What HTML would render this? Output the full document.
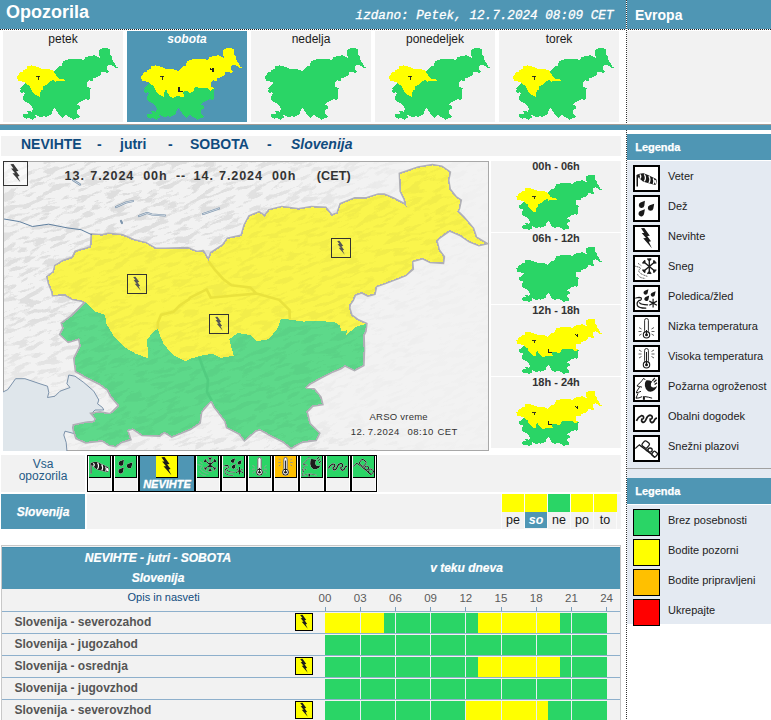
<!DOCTYPE html><html><head><meta charset="utf-8"><style>
*{margin:0;padding:0;box-sizing:border-box}
html,body{width:771px;height:720px;overflow:hidden;background:#fff;font-family:"Liberation Sans",sans-serif;}
.a{position:absolute;white-space:nowrap}
</style></head><body><svg width="0" height="0" style="position:absolute"><defs><symbol id="i-veter" viewBox="0 0 23 23"><rect x="1.5" y="8" width="1.5" height="11.5" fill="#1a1a1a"/>
<path d="M1.8,7.7 Q5,6 8.6,6.2 L13,8.1 L21.2,12.1 Q22.6,14.8 21,17.3 Q20.2,18.1 19.3,17.7 L13.8,16.3 Q9.5,15.4 7.6,14.3 L2,9.2Z" fill="#1a1a1a"/>
<path d="M4.9,7.4 Q6.6,9.5 4.9,11.6 M9.3,7.3 Q11.6,10.9 9.3,14.4 M13.9,9.2 Q16,12.7 13.9,16 M18.2,11.4 Q19.8,14.5 18.3,17.2" stroke="#fff" stroke-width="1.3" fill="none"/>
<ellipse cx="20.3" cy="14.8" rx="1.1" ry="2.1" fill="#fff" transform="rotate(-15 20.3 14.8)"/></symbol><symbol id="i-dez" viewBox="0 0 23 23"><path d="M9.90,3.80L9.38,8.51A2.8,2.8 0 1 1 5.53,5.61Z M9.90,12.20L9.06,17.08A2.8,2.8 0 1 1 5.29,13.99Z M19.20,6.80L18.36,11.50A2.8,2.8 0 1 1 14.69,8.35Z" fill="#1a1a1a"/></symbol><symbol id="i-nevihte" viewBox="0 0 23 23"><path d="M6,1.3 L9.3,1.1 L14.8,8.8 L12.2,9 L16,14.3 L13.8,14.8 L16.9,21.2 L8.2,11.3 L11,11.1 L6.7,6.1 L9.2,5.9 Z"/></symbol><symbol id="i-sneg" viewBox="0 0 23 23"><path d="M14.30,9.50L14.30,1.30M14.30,3.90L16.15,1.54M14.30,3.90L12.45,1.54M14.30,9.50L14.30,17.10M14.30,14.50L12.45,16.86M14.30,14.50L16.15,16.86M14.30,9.50L20.43,4.36M18.44,6.03L21.43,5.92M18.44,6.03L19.06,3.09M14.30,9.50L8.17,4.36M10.16,6.03L9.54,3.09M10.16,6.03L7.17,5.92M14.30,9.50L8.17,14.64M10.16,12.97L7.17,13.08M10.16,12.97L9.54,15.91M14.30,9.50L20.43,14.64M18.44,12.97L19.06,15.91M18.44,12.97L21.43,13.08" stroke="#1a1a1a" stroke-width="1.35" fill="none"/><path d="M0.2,9.2 L5.4,10.6 M3,6.3 L6.3,8.7 M5.9,11 Q-0.5,15.5 12.9,19.5 M2.5,17.2 Q4,21 10.1,21.4" stroke="#1a1a1a" stroke-width="0.7" stroke-dasharray="1.3 0.5" fill="none"/></symbol><symbol id="i-poledica" viewBox="0 0 23 23"><path d="M13.40,2.20L12.66,6.00A2.1,2.1 0 1 1 9.81,3.65Z M20.60,4.20L19.86,8.00A2.1,2.1 0 1 1 17.01,5.65Z M14.20,8.60L13.46,12.40A2.1,2.1 0 1 1 10.61,10.05Z" fill="#1a1a1a"/>
<path d="M0.8,11 L4,10.3 Q6.8,10.4 6.3,12.2 Q5.6,13.6 4.3,13.4 Q1.3,15.2 2.4,18.6 Q4,21.2 10.8,21.1 M4.6,15.8 Q6.2,17.6 12.6,17.8" stroke="#1a1a1a" stroke-width="1.25" fill="none" stroke-linecap="round"/>
<path d="M18.1,11.8 L18.1,20.6 M14.3,14.1 L21.9,18.3 M14.3,18.3 L21.9,14.1" stroke="#1a1a1a" stroke-width="1.2" fill="none"/></symbol><symbol id="i-nizka" viewBox="0 0 23 23"><rect x="9.6" y="1.5" width="3.8" height="14" rx="1.9" fill="#fff" stroke="#1a1a1a" stroke-width="0.9"/><circle cx="11.5" cy="17.8" r="3.2" fill="#fff" stroke="#1a1a1a" stroke-width="1.1"/><circle cx="11.5" cy="17.8" r="1.5" fill="#1a1a1a"/><rect x="11.0" y="13" width="1" height="4" fill="#1a1a1a"/><path d="M4,10.5 L6.5,12 M3.5,14.5 L6.5,14.5 M4,18.5 L6.5,17 M19,10.5 L16.5,12 M19.5,14.5 L16.5,14.5 M19,18.5 L16.5,17" stroke="#1a1a1a" stroke-width="0.7"/></symbol><symbol id="i-visoka" viewBox="0 0 23 23"><rect x="9.6" y="1.5" width="3.8" height="14" rx="1.9" fill="#fff" stroke="#1a1a1a" stroke-width="0.9"/><circle cx="11.5" cy="17.8" r="3.2" fill="#fff" stroke="#1a1a1a" stroke-width="1.1"/><circle cx="11.5" cy="17.8" r="1.5" fill="#1a1a1a"/><rect x="11.0" y="5" width="1" height="12" fill="#1a1a1a"/><path d="M4,3 L6.5,4.5 M3.5,7 L6.5,7 M4,11 L6.5,9.5 M19,3 L16.5,4.5 M19.5,7 L16.5,7 M19,11 L16.5,9.5" stroke="#1a1a1a" stroke-width="0.7"/></symbol><symbol id="i-pozar" viewBox="0 0 23 23"><path d="M8.7,1.2 L7.1,3.4 L5,5.9 L2.6,7.9 L2.2,9.1 Q4.5,9.3 7,10.2 M4.6,10 L3.4,11.9 L1.8,14.3 L1.4,15.9 Q3.5,15.4 6,14.3 M3,16.3 L2.2,18.3 L1,21.2 Q4,21.4 7.1,19.6 M9.9,19.6 Q13.5,20 17.1,21.2 M8.7,1.2 Q9.6,2 10.2,3" stroke="#1a1a1a" stroke-width="1.0" fill="none"/>
<rect x="7.9" y="19.2" width="2" height="3.6" fill="#1a1a1a"/>
<path d="M11.1,3.4 Q9.2,6 9.9,9 Q10.5,12.8 13.1,14.3 Q16.5,15.5 19.6,13.1 Q21.8,11 22,8.8 Q20.5,10.8 18.6,10.6 Q16.2,10.8 15.8,8.5 Q15.6,6 17.3,4.5 Q14,3 11.1,3.4Z" fill="#1a1a1a"/>
<path d="M17.3,3.8 L19.8,1 M18.8,5.4 L21.5,2.8 M19.6,7.6 L22,5.8" stroke="#1a1a1a" stroke-width="1.2" fill="none"/></symbol><symbol id="i-obalni" viewBox="0 0 23 23"><path d="M1.4,13.8 Q3,10 6.3,8.7 Q8.8,8.5 8.6,11 Q8,12.5 6.8,12.2 Q6,14.5 8,15.4 Q9.8,15.5 11,12.5 Q12.5,8.5 15,8.2 Q17.5,8.5 17.2,11 Q16.5,12.5 15.2,12.2 Q14.8,15 16.8,15.6 Q18.8,15.5 19.8,12.5 Q20.5,11.3 22,11.1" stroke="#1a1a1a" stroke-width="1.7" fill="none"/></symbol><symbol id="i-plaz" viewBox="0 0 23 23"><path d="M0.2,11.5 Q2.5,9.5 4.3,7.9 L11,13 L17,17.8 L19.8,20.5" stroke="#1a1a1a" stroke-width="1.2" fill="none"/>
<rect x="7.6" y="4.4" width="6.2" height="6.2" rx="1.6" transform="rotate(40 10.7 7.5)" fill="none" stroke="#1a1a1a" stroke-width="1.3"/>
<circle cx="15.1" cy="13.1" r="2.1" fill="none" stroke="#1a1a1a" stroke-width="1.3"/>
<circle cx="11.9" cy="13.1" r="0.9" fill="none" stroke="#1a1a1a" stroke-width="0.8"/>
<rect x="17.2" y="14.7" width="4.8" height="4.8" rx="1.2" transform="rotate(40 19.6 17.1)" fill="none" stroke="#1a1a1a" stroke-width="1.3"/></symbol><filter id="rf1" color-interpolation-filters="sRGB" filterUnits="userSpaceOnUse" x="-300" y="-300" width="1400" height="1400">
 <feTurbulence type="fractalNoise" baseFrequency="0.06 0.22" numOctaves="3" seed="7" result="n"/>
 <feColorMatrix in="n" type="matrix" values="0 0 0 0 0.865  0 0 0 0 0.865  0 0 0 0 0.865  4 0 0 0 -1.6"/>
 <feComponentTransfer><feFuncA type="discrete" tableValues="0 0 0.5 1"/></feComponentTransfer>
</filter>
<filter id="rf2" color-interpolation-filters="sRGB" filterUnits="userSpaceOnUse" x="-300" y="-300" width="1400" height="1400">
 <feTurbulence type="fractalNoise" baseFrequency="0.06 0.22" numOctaves="3" seed="7" result="n"/>
 <feColorMatrix in="n" type="matrix" values="0 0 0 0 0.2  0 0 0 0 0.2  0 0 0 0 0.2  4 0 0 0 -1.6"/>
 <feComponentTransfer><feFuncA type="discrete" tableValues="0 0 0.5 1"/></feComponentTransfer>
</filter>
<radialGradient id="rg" gradientUnits="userSpaceOnUse" cx="130" cy="195" r="340" fx="130" fy="195">
 <stop offset="0" stop-color="#fff"/><stop offset="0.4" stop-color="#fff" stop-opacity="0.85"/><stop offset="0.8" stop-color="#fff" stop-opacity="0.22"/><stop offset="1" stop-color="#fff" stop-opacity="0.1"/>
</radialGradient>
<radialGradient id="rg2"><stop offset="0" stop-color="#fff" stop-opacity="0.8"/><stop offset="1" stop-color="#fff" stop-opacity="0"/></radialGradient>
<mask id="rm" maskUnits="userSpaceOnUse" x="0" y="0" width="771" height="720"><rect x="4" y="162" width="484" height="288" fill="url(#rg)"/><ellipse cx="240" cy="455" rx="190" ry="45" fill="url(#rg2)"/><ellipse cx="30" cy="300" rx="60" ry="90" fill="url(#rg2)"/></mask>
<filter id="halo" x="-20%" y="-20%" width="140%" height="140%"><feMorphology in="SourceAlpha" operator="dilate" radius="0.5" result="d"/><feFlood flood-color="#fff" flood-opacity="0.75"/><feComposite in2="d" operator="in" result="w"/><feMerge><feMergeNode in="w"/><feMergeNode in="SourceGraphic"/></feMerge></filter>
<clipPath id="mclip"><rect x="4" y="162" width="484" height="288"/></clipPath></defs></svg>
<div class="a" style="left:0;top:0;width:626px;height:29px;background:#4f96b4"></div>
<div class="a" style="left:627px;top:0;width:144px;height:29px;background:#4f96b4"></div>
<div class="a" style="left:0;top:29px;width:771px;height:1px;background:repeating-linear-gradient(90deg,#222 0 1px,#fff 1px 2px)"></div>
<div class="a" style="left:626px;top:0;width:1px;height:720px;background:repeating-linear-gradient(180deg,#333 0 1px,#fff 1px 2px)"></div>
<div class="a" style="left:6.00px;top:2.56px;font-size:18px;line-height:18px;font-weight:bold;color:#fff">Opozorila</div>
<div class="a" style="left:355.60px;top:9.99px;font-size:12.65px;line-height:12.65px;font-family:'Liberation Mono',monospace;font-style:italic;color:#fff;-webkit-text-stroke:0.3px #fff">izdano: Petek, 12.7.2024 08:09 CET</div>
<div class="a" style="left:635.00px;top:7.85px;font-size:14px;line-height:14px;font-weight:bold;color:#fff">Evropa</div>
<div class="a" style="left:3px;top:31px;width:120px;height:91px;background:#f2f2f2"></div>
<div class="a" style="left:3.00px;top:32.54px;width:120px;text-align:center;font-size:12px;line-height:12px;color:#1a1a1a">petek</div>
<div class="a" style="left:127px;top:31px;width:120px;height:91px;background:#4f96b4"></div>
<div class="a" style="left:127.00px;top:32.54px;width:120px;text-align:center;font-size:12px;line-height:12px;font-weight:bold;font-style:italic;color:#fff">sobota</div>
<div class="a" style="left:251px;top:31px;width:120px;height:91px;background:#f2f2f2"></div>
<div class="a" style="left:251.00px;top:32.54px;width:120px;text-align:center;font-size:12px;line-height:12px;color:#1a1a1a">nedelja</div>
<div class="a" style="left:375px;top:31px;width:120px;height:91px;background:#f2f2f2"></div>
<div class="a" style="left:375.00px;top:32.54px;width:120px;text-align:center;font-size:12px;line-height:12px;color:#1a1a1a">ponedeljek</div>
<div class="a" style="left:499px;top:31px;width:120px;height:91px;background:#f2f2f2"></div>
<div class="a" style="left:499.00px;top:32.54px;width:120px;text-align:center;font-size:12px;line-height:12px;color:#1a1a1a">torek</div>
<div class="a" style="left:627px;top:31px;width:144px;height:91px;background:#f2f2f2"></div>
<svg class="a" style="left:0;top:0" width="771" height="130" shape-rendering="crispEdges"><path d="M17.0,76.4 18.4,75.2 18.8,73.6 20.6,72.4 22.8,71.6 23.5,70.0 26.0,69.2 27.1,68.8 27.3,65.6 29.6,65.8 31.0,65.4 34.3,65.8 36.8,67.0 39.7,67.8 41.9,69.2 44.3,69.3 49.3,69.1 51.5,70.1 52.9,69.9 54.2,72.2 54.9,70.3 57.6,68.3 58.7,66.7 61.9,65.9 62.6,63.1 63.7,60.9 65.9,59.9 67.2,60.9 68.3,59.3 71.1,58.6 75.1,59.1 78.0,58.6 81.2,58.7 82.7,60.7 84.1,60.1 84.8,57.7 88.1,56.4 90.6,56.4 93.5,55.4 94.8,55.4 96.9,56.4 99.1,57.6 100.0,58.4 99.7,56.4 98.8,54.4 98.6,50.0 100.2,49.4 102.7,48.4 106.0,47.8 108.1,48.2 109.9,49.6 109.6,51.6 109.9,54.0 111.4,56.0 112.5,56.8 112.1,58.8 111.7,59.6 113.2,61.2 115.3,64.0 116.0,66.3 118.2,67.7 116.8,68.1 114.6,67.1 112.5,65.5 109.9,64.3 107.4,66.3 106.9,67.1 107.4,69.5 108.6,71.2 108.4,72.7 105.5,72.5 103.7,71.5 101.2,72.2 101.4,74.2 99.7,75.8 97.9,76.6 95.1,77.8 92.9,78.6 92.5,80.6 91.1,81.0 89.7,80.2 88.0,80.8 87.5,82.2 86.8,83.3 86.7,84.3 87.2,86.3 88.6,87.4 90.6,88.4 90.4,90.2 90.0,91.2 90.1,95.1 89.9,98.9 88.0,100.1 85.8,98.9 84.7,99.7 82.9,100.5 80.0,102.1 77.5,103.7 76.3,104.8 78.6,105.2 80.0,107.2 80.4,108.8 78.3,109.2 76.8,110.8 77.5,114.0 79.7,116.4 79.0,118.0 76.1,118.4 75.1,118.8 73.3,120.0 71.5,118.4 68.6,116.8 66.1,115.2 65.0,115.6 62.5,118.0 61.4,116.4 58.6,114.8 58.2,113.2 57.1,111.6 55.7,109.6 54.9,108.0 54.2,108.4 52.4,110.8 52.1,113.6 49.9,115.2 45.7,117.1 43.9,115.9 42.8,116.9 38.9,116.7 36.7,115.1 35.3,115.5 36.0,117.9 33.9,118.6 32.7,119.6 31.2,119.2 29.7,118.1 25.8,118.6 23.7,117.6 23.1,115.6 23.1,114.4 25.8,113.8 27.9,113.6 28.2,112.6 27.3,111.4 29.1,111.1 31.5,111.6 33.6,109.3 31.6,106.7 30.9,105.1 29.0,103.6 26.1,102.0 23.6,100.4 23.2,97.2 24.7,94.0 24.3,92.0 21.8,92.9 20.0,91.1 20.7,89.5 20.4,88.3 22.5,86.5 25.7,82.9 24.9,82.3 22.8,81.9 21.0,80.7 18.2,80.9 18.1,80.0 17.3,78.0Z" fill="#2ad566"/><path d="M25.7,82.9 24.9,82.3 22.8,81.9 21.0,80.7 18.2,80.9 18.1,80.0 17.3,78.0 17.0,76.4 18.4,75.2 18.8,73.6 20.6,72.4 22.8,71.6 23.5,70.0 26.0,69.2 27.1,68.8 27.3,65.6 29.6,65.8 31.0,65.4 34.3,65.8 36.8,67.0 39.7,67.8 41.9,69.2 44.3,69.3 49.3,69.1 51.5,70.1 52.9,69.9 54.2,72.2 55.7,74.6 57.6,76.9 59.5,78.5 63.8,79.0 65.3,80.6 59.5,81.2 54.7,81.7 53.7,79.5 49.9,81.7 49.7,82.1 47.5,83.7 46.1,85.3 43.2,86.1 42.5,88.1 42.5,89.7 41.4,90.4 39.9,92.4 40.3,97.2 37.4,96.0 34.9,94.4 32.4,91.7 30.6,88.5 30.2,86.1 28.1,85.3 26.6,83.7Z" fill="#ffff00"/><path d="M35.59,76.40L40.44,76.40M38.02,76.40L38.02,80.00" stroke="#222" stroke-width="0.9" fill="none"/><path d="M141.0,76.4 142.4,75.2 142.8,73.6 144.6,72.4 146.8,71.6 147.5,70.0 150.0,69.2 151.1,68.8 151.3,65.6 153.6,65.8 155.0,65.4 158.3,65.8 160.8,67.0 163.7,67.8 165.9,69.2 168.3,69.3 173.3,69.1 175.5,70.1 176.9,69.9 178.2,72.2 178.9,70.3 181.6,68.3 182.7,66.7 185.9,65.9 186.6,63.1 187.7,60.9 189.9,59.9 191.2,60.9 192.3,59.3 195.1,58.6 199.1,59.1 202.0,58.6 205.2,58.7 206.7,60.7 208.1,60.1 208.8,57.7 212.1,56.4 214.6,56.4 217.5,55.4 218.8,55.4 220.9,56.4 223.1,57.6 224.0,58.4 223.7,56.4 222.8,54.4 222.6,50.0 224.2,49.4 226.7,48.4 230.0,47.8 232.1,48.2 233.9,49.6 233.6,51.6 233.9,54.0 235.4,56.0 236.5,56.8 236.1,58.8 235.7,59.6 237.2,61.2 239.3,64.0 240.0,66.3 242.2,67.7 240.8,68.1 238.6,67.1 236.5,65.5 233.9,64.3 231.4,66.3 230.9,67.1 231.4,69.5 232.6,71.2 232.4,72.7 229.5,72.5 227.7,71.5 225.2,72.2 225.4,74.2 223.7,75.8 221.9,76.6 219.1,77.8 216.9,78.6 216.5,80.6 215.1,81.0 213.7,80.2 212.0,80.8 211.5,82.2 210.8,83.3 210.7,84.3 211.2,86.3 212.6,87.4 214.6,88.4 214.4,90.2 214.0,91.2 214.1,95.1 213.9,98.9 212.0,100.1 209.8,98.9 208.7,99.7 206.9,100.5 204.0,102.1 201.5,103.7 200.3,104.8 202.6,105.2 204.0,107.2 204.4,108.8 202.3,109.2 200.8,110.8 201.5,114.0 203.7,116.4 203.0,118.0 200.1,118.4 199.1,118.8 197.3,120.0 195.5,118.4 192.6,116.8 190.1,115.2 189.0,115.6 186.5,118.0 185.4,116.4 182.6,114.8 182.2,113.2 181.1,111.6 179.7,109.6 178.9,108.0 178.2,108.4 176.4,110.8 176.1,113.6 173.9,115.2 169.7,117.1 167.9,115.9 166.8,116.9 162.9,116.7 160.7,115.1 159.3,115.5 160.0,117.9 157.9,118.6 156.7,119.6 155.2,119.2 153.7,118.1 149.8,118.6 147.7,117.6 147.1,115.6 147.1,114.4 149.8,113.8 151.9,113.6 152.2,112.6 151.3,111.4 153.1,111.1 155.5,111.6 157.6,109.3 155.6,106.7 154.9,105.1 153.0,103.6 150.1,102.0 147.6,100.4 147.2,97.2 148.7,94.0 148.3,92.0 145.8,92.9 144.0,91.1 144.7,89.5 144.4,88.3 146.5,86.5 149.7,82.9 148.9,82.3 146.8,81.9 145.0,80.7 142.2,80.9 142.1,80.0 141.3,78.0Z" fill="#2ad566"/><path d="M149.7,82.9 148.9,82.3 146.8,81.9 145.0,80.7 142.2,80.9 142.1,80.0 141.3,78.0 141.0,76.4 142.4,75.2 142.8,73.6 144.6,72.4 146.8,71.6 147.5,70.0 150.0,69.2 151.1,68.8 151.3,65.6 153.6,65.8 155.0,65.4 158.3,65.8 160.8,67.0 163.7,67.8 165.9,69.2 168.3,69.3 173.3,69.1 175.5,70.1 176.9,69.9 178.2,72.2 178.9,70.3 181.6,68.3 182.7,66.7 185.9,65.9 186.6,63.1 187.7,60.9 189.9,59.9 191.2,60.9 192.3,59.3 195.1,58.6 199.1,59.1 202.0,58.6 205.2,58.7 206.7,60.7 208.1,60.1 208.8,57.7 212.1,56.4 214.6,56.4 217.5,55.4 218.8,55.4 220.9,56.4 223.1,57.6 224.0,58.4 223.7,56.4 222.8,54.4 222.6,50.0 224.2,49.4 226.7,48.4 230.0,47.8 232.1,48.2 233.9,49.6 233.6,51.6 233.9,54.0 235.4,56.0 236.5,56.8 236.1,58.8 235.7,59.6 237.2,61.2 239.3,64.0 240.0,66.3 242.2,67.7 240.8,68.1 238.6,67.1 236.5,65.5 233.9,64.3 231.4,66.3 230.9,67.1 231.4,69.5 232.6,71.2 232.4,72.7 229.5,72.5 227.7,71.5 225.2,72.2 225.4,74.2 223.7,75.8 221.9,76.6 219.1,77.8 216.9,78.6 216.5,80.6 215.1,81.0 213.7,80.2 212.0,80.8 211.5,82.2 210.8,83.3 210.7,84.3 211.2,86.3 212.6,87.4 214.6,88.4 212.5,89.0 209.9,91.3 210.3,90.0 208.8,90.2 208.7,88.8 207.6,88.0 203.7,87.5 200.3,87.8 195.0,87.0 194.1,89.7 192.2,92.3 189.3,92.8 187.8,91.2 184.9,90.7 183.0,92.3 184.0,96.5 181.1,97.1 179.2,96.0 176.3,96.5 173.9,97.3 172.9,98.0 170.1,96.4 167.9,93.6 167.2,92.0 166.5,89.7 165.4,90.4 163.9,92.4 164.3,97.2 161.4,96.0 158.9,94.4 156.4,91.7 154.6,88.5 154.2,86.1 152.1,85.3 150.6,83.7Z" fill="#ffff00"/><path d="M159.59,76.40L164.44,76.40M162.02,76.40L162.02,80.00" stroke="#222" stroke-width="0.9" fill="none"/><path d="M212.95,67.60L212.95,72.00M209.91,68.30L212.24,70.30M178.99,86.80L178.99,91.40L183.44,91.40" stroke="#222" stroke-width="1.1" fill="none"/><path d="M265.0,76.4 266.4,75.2 266.8,73.6 268.6,72.4 270.8,71.6 271.5,70.0 274.0,69.2 275.1,68.8 275.3,65.6 277.6,65.8 279.0,65.4 282.3,65.8 284.8,67.0 287.7,67.8 289.9,69.2 292.3,69.3 297.3,69.1 299.5,70.1 300.9,69.9 302.2,72.2 302.9,70.3 305.6,68.3 306.7,66.7 309.9,65.9 310.6,63.1 311.7,60.9 313.9,59.9 315.2,60.9 316.3,59.3 319.1,58.6 323.1,59.1 326.0,58.6 329.2,58.7 330.7,60.7 332.1,60.1 332.8,57.7 336.1,56.4 338.6,56.4 341.5,55.4 342.8,55.4 344.9,56.4 347.1,57.6 348.0,58.4 347.7,56.4 346.8,54.4 346.6,50.0 348.2,49.4 350.7,48.4 354.0,47.8 356.1,48.2 357.9,49.6 357.6,51.6 357.9,54.0 359.4,56.0 360.5,56.8 360.1,58.8 359.7,59.6 361.2,61.2 363.3,64.0 364.0,66.3 366.2,67.7 364.8,68.1 362.6,67.1 360.5,65.5 357.9,64.3 355.4,66.3 354.9,67.1 355.4,69.5 356.6,71.2 356.4,72.7 353.5,72.5 351.7,71.5 349.2,72.2 349.4,74.2 347.7,75.8 345.9,76.6 343.1,77.8 340.9,78.6 340.5,80.6 339.1,81.0 337.7,80.2 336.0,80.8 335.5,82.2 334.8,83.3 334.7,84.3 335.2,86.3 336.6,87.4 338.6,88.4 338.4,90.2 338.0,91.2 338.1,95.1 337.9,98.9 336.0,100.1 333.8,98.9 332.7,99.7 330.9,100.5 328.0,102.1 325.5,103.7 324.3,104.8 326.6,105.2 328.0,107.2 328.4,108.8 326.3,109.2 324.8,110.8 325.5,114.0 327.7,116.4 327.0,118.0 324.1,118.4 323.1,118.8 321.3,120.0 319.5,118.4 316.6,116.8 314.1,115.2 313.0,115.6 310.5,118.0 309.4,116.4 306.6,114.8 306.2,113.2 305.1,111.6 303.7,109.6 302.9,108.0 302.2,108.4 300.4,110.8 300.1,113.6 297.9,115.2 293.7,117.1 291.9,115.9 290.8,116.9 286.9,116.7 284.7,115.1 283.3,115.5 284.0,117.9 281.9,118.6 280.7,119.6 279.2,119.2 277.7,118.1 273.8,118.6 271.7,117.6 271.1,115.6 271.1,114.4 273.8,113.8 275.9,113.6 276.2,112.6 275.3,111.4 277.1,111.1 279.5,111.6 281.6,109.3 279.6,106.7 278.9,105.1 277.0,103.6 274.1,102.0 271.6,100.4 271.2,97.2 272.7,94.0 272.3,92.0 269.8,92.9 268.0,91.1 268.7,89.5 268.4,88.3 270.5,86.5 273.7,82.9 272.9,82.3 270.8,81.9 269.0,80.7 266.2,80.9 266.1,80.0 265.3,78.0Z" fill="#2ad566"/><path d="M389.0,76.4 390.4,75.2 390.8,73.6 392.6,72.4 394.8,71.6 395.5,70.0 398.0,69.2 399.1,68.8 399.3,65.6 401.6,65.8 403.0,65.4 406.3,65.8 408.8,67.0 411.7,67.8 413.9,69.2 416.3,69.3 421.3,69.1 423.5,70.1 424.9,69.9 426.2,72.2 426.9,70.3 429.6,68.3 430.7,66.7 433.9,65.9 434.6,63.1 435.7,60.9 437.9,59.9 439.2,60.9 440.3,59.3 443.1,58.6 447.1,59.1 450.0,58.6 453.2,58.7 454.7,60.7 456.1,60.1 456.8,57.7 460.1,56.4 462.6,56.4 465.5,55.4 466.8,55.4 468.9,56.4 471.1,57.6 472.0,58.4 471.7,56.4 470.8,54.4 470.6,50.0 472.2,49.4 474.7,48.4 478.0,47.8 480.1,48.2 481.9,49.6 481.6,51.6 481.9,54.0 483.4,56.0 484.5,56.8 484.1,58.8 483.7,59.6 485.2,61.2 487.3,64.0 488.0,66.3 490.2,67.7 488.8,68.1 486.6,67.1 484.5,65.5 481.9,64.3 479.4,66.3 478.9,67.1 479.4,69.5 480.6,71.2 480.4,72.7 477.5,72.5 475.7,71.5 473.2,72.2 473.4,74.2 471.7,75.8 469.9,76.6 467.1,77.8 464.9,78.6 464.5,80.6 463.1,81.0 461.7,80.2 460.0,80.8 459.5,82.2 458.8,83.3 458.7,84.3 459.2,86.3 460.6,87.4 462.6,88.4 462.4,90.2 462.0,91.2 462.1,95.1 461.9,98.9 460.0,100.1 457.8,98.9 456.7,99.7 454.9,100.5 452.0,102.1 449.5,103.7 448.3,104.8 450.6,105.2 452.0,107.2 452.4,108.8 450.3,109.2 448.8,110.8 449.5,114.0 451.7,116.4 451.0,118.0 448.1,118.4 447.1,118.8 445.3,120.0 443.5,118.4 440.6,116.8 438.1,115.2 437.0,115.6 434.5,118.0 433.4,116.4 430.6,114.8 430.2,113.2 429.1,111.6 427.7,109.6 426.9,108.0 426.2,108.4 424.4,110.8 424.1,113.6 421.9,115.2 417.7,117.1 415.9,115.9 414.8,116.9 410.9,116.7 408.7,115.1 407.3,115.5 408.0,117.9 405.9,118.6 404.7,119.6 403.2,119.2 401.7,118.1 397.8,118.6 395.7,117.6 395.1,115.6 395.1,114.4 397.8,113.8 399.9,113.6 400.2,112.6 399.3,111.4 401.1,111.1 403.5,111.6 405.6,109.3 403.6,106.7 402.9,105.1 401.0,103.6 398.1,102.0 395.6,100.4 395.2,97.2 396.7,94.0 396.3,92.0 393.8,92.9 392.0,91.1 392.7,89.5 392.4,88.3 394.5,86.5 397.7,82.9 396.9,82.3 394.8,81.9 393.0,80.7 390.2,80.9 390.1,80.0 389.3,78.0Z" fill="#2ad566"/><path d="M397.7,82.9 396.9,82.3 394.8,81.9 393.0,80.7 390.2,80.9 390.1,80.0 389.3,78.0 389.0,76.4 390.4,75.2 390.8,73.6 392.6,72.4 394.8,71.6 395.5,70.0 398.0,69.2 399.1,68.8 399.3,65.6 401.6,65.8 403.0,65.4 406.3,65.8 408.8,67.0 411.7,67.8 413.9,69.2 416.3,69.3 421.3,69.1 423.5,70.1 424.9,69.9 426.2,72.2 427.7,74.6 429.6,76.9 431.5,78.5 435.8,79.0 437.3,80.6 431.5,81.2 426.7,81.7 425.7,79.5 421.9,81.7 421.7,82.1 419.5,83.7 418.1,85.3 415.2,86.1 414.5,88.1 414.5,89.7 413.4,90.4 411.9,92.4 412.3,97.2 409.4,96.0 406.9,94.4 404.4,91.7 402.6,88.5 402.2,86.1 400.1,85.3 398.6,83.7Z" fill="#ffff00"/><path d="M407.59,76.40L412.44,76.40M410.02,76.40L410.02,80.00" stroke="#222" stroke-width="0.9" fill="none"/><path d="M513.0,76.4 514.4,75.2 514.8,73.6 516.6,72.4 518.8,71.6 519.5,70.0 522.0,69.2 523.1,68.8 523.3,65.6 525.6,65.8 527.0,65.4 530.3,65.8 532.8,67.0 535.7,67.8 537.9,69.2 540.3,69.3 545.3,69.1 547.5,70.1 548.9,69.9 550.2,72.2 550.9,70.3 553.6,68.3 554.7,66.7 557.9,65.9 558.6,63.1 559.7,60.9 561.9,59.9 563.2,60.9 564.3,59.3 567.1,58.6 571.1,59.1 574.0,58.6 577.2,58.7 578.7,60.7 580.1,60.1 580.8,57.7 584.1,56.4 586.6,56.4 589.5,55.4 590.8,55.4 592.9,56.4 595.1,57.6 596.0,58.4 595.7,56.4 594.8,54.4 594.6,50.0 596.2,49.4 598.7,48.4 602.0,47.8 604.1,48.2 605.9,49.6 605.6,51.6 605.9,54.0 607.4,56.0 608.5,56.8 608.1,58.8 607.7,59.6 609.2,61.2 611.3,64.0 612.0,66.3 614.2,67.7 612.8,68.1 610.6,67.1 608.5,65.5 605.9,64.3 603.4,66.3 602.9,67.1 603.4,69.5 604.6,71.2 604.4,72.7 601.5,72.5 599.7,71.5 597.2,72.2 597.4,74.2 595.7,75.8 593.9,76.6 591.1,77.8 588.9,78.6 588.5,80.6 587.1,81.0 585.7,80.2 584.0,80.8 583.5,82.2 582.8,83.3 582.7,84.3 583.2,86.3 584.6,87.4 586.6,88.4 586.4,90.2 586.0,91.2 586.1,95.1 585.9,98.9 584.0,100.1 581.8,98.9 580.7,99.7 578.9,100.5 576.0,102.1 573.5,103.7 572.3,104.8 574.6,105.2 576.0,107.2 576.4,108.8 574.3,109.2 572.8,110.8 573.5,114.0 575.7,116.4 575.0,118.0 572.1,118.4 571.1,118.8 569.3,120.0 567.5,118.4 564.6,116.8 562.1,115.2 561.0,115.6 558.5,118.0 557.4,116.4 554.6,114.8 554.2,113.2 553.1,111.6 551.7,109.6 550.9,108.0 550.2,108.4 548.4,110.8 548.1,113.6 545.9,115.2 541.7,117.1 539.9,115.9 538.8,116.9 534.9,116.7 532.7,115.1 531.3,115.5 532.0,117.9 529.9,118.6 528.7,119.6 527.2,119.2 525.7,118.1 521.8,118.6 519.7,117.6 519.1,115.6 519.1,114.4 521.8,113.8 523.9,113.6 524.2,112.6 523.3,111.4 525.1,111.1 527.5,111.6 529.6,109.3 527.6,106.7 526.9,105.1 525.0,103.6 522.1,102.0 519.6,100.4 519.2,97.2 520.7,94.0 520.3,92.0 517.8,92.9 516.0,91.1 516.7,89.5 516.4,88.3 518.5,86.5 521.7,82.9 520.9,82.3 518.8,81.9 517.0,80.7 514.2,80.9 514.1,80.0 513.3,78.0Z" fill="#2ad566"/><path d="M521.7,82.9 520.9,82.3 518.8,81.9 517.0,80.7 514.2,80.9 514.1,80.0 513.3,78.0 513.0,76.4 514.4,75.2 514.8,73.6 516.6,72.4 518.8,71.6 519.5,70.0 522.0,69.2 523.1,68.8 523.3,65.6 525.6,65.8 527.0,65.4 530.3,65.8 532.8,67.0 535.7,67.8 537.9,69.2 540.3,69.3 545.3,69.1 547.5,70.1 548.9,69.9 550.2,72.2 551.7,74.6 553.6,76.9 555.5,78.5 559.8,79.0 561.3,80.6 555.5,81.2 550.7,81.7 549.7,79.5 545.9,81.7 545.7,82.1 543.5,83.7 542.1,85.3 539.2,86.1 538.5,88.1 538.5,89.7 537.4,90.4 535.9,92.4 536.3,97.2 533.4,96.0 530.9,94.4 528.4,91.7 526.6,88.5 526.2,86.1 524.1,85.3 522.6,83.7Z" fill="#ffff00"/><path d="M531.59,76.40L536.44,76.40M534.02,76.40L534.02,80.00" stroke="#222" stroke-width="0.9" fill="none"/></svg>
<div class="a" style="left:0;top:124px;width:771px;height:1px;background:#a39d97"></div>
<div class="a" style="left:0;top:125px;width:771px;height:5px;background:#4f96b4"></div>
<div class="a" style="left:1px;top:136px;width:620px;height:20px;background:#f2f2f2"></div>
<div class="a" style="left:21.00px;top:136.85px;font-size:14px;line-height:14px;font-weight:bold;color:#0f4b7e">NEVIHTE</div>
<div class="a" style="left:97.00px;top:136.85px;font-size:14px;line-height:14px;font-weight:bold;color:#0f4b7e">-</div>
<div class="a" style="left:120.00px;top:136.85px;font-size:14px;line-height:14px;font-weight:bold;color:#0f4b7e">jutri</div>
<div class="a" style="left:168.00px;top:136.85px;font-size:14px;line-height:14px;font-weight:bold;color:#0f4b7e">-</div>
<div class="a" style="left:190.00px;top:136.85px;font-size:14px;line-height:14px;font-weight:bold;color:#0f4b7e">SOBOTA</div>
<div class="a" style="left:267.00px;top:136.85px;font-size:14px;line-height:14px;font-weight:bold;color:#0f4b7e">-</div>
<div class="a" style="left:291.00px;top:136.85px;font-size:14px;line-height:14px;font-weight:bold;font-style:italic;color:#0f4b7e">Slovenija</div>
<div class="a" style="left:3px;top:161px;width:486px;height:290px;background:#f2f2f2;border:1px solid #a8a8a8"></div>
<svg class="a" style="left:0;top:0" width="771" height="720"><g clip-path="url(#mclip)"><g mask="url(#rm)"><g transform="rotate(-20 250 300)"><rect x="-150" y="0" width="800" height="600" filter="url(#rf1)"/></g></g></g><path d="M3.0,392.0 7.8,389.6 15.6,378.7 24.9,378.7 40.0,383.8 47.5,386.2 48.8,392.5 47.5,397.5 55.0,396.2 60.0,391.2 70.0,387.5 66.9,383.8 68.8,375.0 75.0,376.2 83.8,382.5 93.8,391.2 98.8,400.0 97.5,403.8 102.5,407.5 103.8,410.0 95.0,410.0 92.5,412.5 91.2,413.8 97.5,418.8 93.8,421.2 86.2,422.5 73.8,425.0 72.5,427.5 75.0,433.8 65.0,431.2 63.8,435.0 66.2,442.5 66.9,451.0 L3,451Z" fill="#dfe6eb"/><path d="M3.0,392.0 7.8,389.6 15.6,378.7 24.9,378.7 40.0,383.8 47.5,386.2 48.8,392.5 47.5,397.5 55.0,396.2 60.0,391.2 70.0,387.5 66.9,383.8 68.8,375.0 75.0,376.2 83.8,382.5 93.8,391.2 98.8,400.0 97.5,403.8 102.5,407.5 103.8,410.0 95.0,410.0 92.5,412.5 91.2,413.8 97.5,418.8 93.8,421.2 86.2,422.5 73.8,425.0 72.5,427.5 75.0,433.8 65.0,431.2 63.8,435.0 66.2,442.5 66.9,451.0" fill="none" stroke="#6f88a3" stroke-width="0.9"/><path d="M47.8,277.0 54.0,272.3 55.6,266.0 63.3,261.4 72.7,258.2 75.8,252.0 86.7,248.9 91.4,247.4 92.1,234.9 102.3,235.7 108.5,234.1 122.5,235.7 133.4,240.4 145.8,243.5 155.2,248.9 165.6,249.3 187.4,248.5 196.7,252.4 202.9,251.6 208.4,260.9 211.5,253.2 223.2,245.4 227.8,239.1 241.8,236.0 245.0,225.1 249.6,216.6 259.0,212.7 264.7,216.7 269.3,210.5 281.8,207.4 298.9,209.7 311.4,207.4 325.4,208.1 331.6,215.9 337.8,213.6 340.9,204.2 354.9,198.8 365.8,198.8 378.3,194.9 384.0,195.0 393.3,198.9 402.7,203.6 406.6,206.7 405.0,198.9 401.1,191.1 400.3,174.0 407.4,171.7 418.2,167.8 432.3,165.4 441.6,167.0 449.4,172.5 447.8,180.2 449.4,189.6 455.6,197.4 460.3,200.5 458.7,208.2 457.2,211.4 463.4,217.6 472.7,228.5 475.8,237.8 485.2,243.3 479.0,244.8 469.6,240.9 460.3,234.7 449.4,230.0 438.5,237.8 436.1,240.9 438.5,250.3 443.5,257.0 442.7,262.5 430.3,261.7 422.5,257.8 411.6,260.9 412.4,268.7 405.4,274.9 397.6,278.0 385.1,282.7 375.8,285.8 374.2,293.6 368.0,295.1 361.8,292.0 354.8,294.4 352.5,299.8 349.6,303.9 348.8,307.8 351.1,315.6 357.4,320.2 365.9,324.1 365.1,331.1 363.2,335.0 363.6,350.0 363.0,364.9 354.5,369.6 345.1,364.9 340.5,368.0 332.7,371.1 320.2,377.4 309.3,383.6 303.9,388.2 314.0,389.8 320.2,397.6 321.8,403.8 312.5,405.4 306.2,411.6 309.3,424.0 318.7,433.4 315.6,439.6 303.1,441.2 299.0,442.7 291.2,447.4 283.4,441.2 270.9,434.9 260.0,428.7 255.4,430.3 244.5,439.6 239.8,433.4 227.4,427.2 225.8,420.9 221.1,414.7 214.9,406.9 211.8,400.7 208.7,402.3 200.9,411.6 199.3,422.5 190.0,428.7 171.8,436.0 164.0,431.4 159.4,435.3 142.3,434.5 132.9,428.2 126.7,429.8 129.8,439.1 120.8,441.9 115.6,445.8 109.1,444.5 102.6,440.0 85.8,441.9 76.7,438.0 74.1,430.2 74.1,425.7 85.8,423.1 94.9,422.4 96.1,418.5 92.3,414.0 100.0,412.7 110.4,414.6 119.5,405.6 111.1,395.6 108.0,389.3 99.6,383.4 87.2,377.2 76.3,370.9 74.7,358.5 80.9,346.0 79.4,338.2 68.5,341.4 60.7,334.4 63.8,328.1 62.3,323.5 71.6,316.5 85.6,302.5 82.0,300.3 72.7,298.7 64.9,294.0 53.2,294.8 52.5,291.0 49.3,283.2Z" fill="none" stroke="#b0b0b6" stroke-width="3.4"/><path d="M85.6,302.5 82.0,300.3 72.7,298.7 64.9,294.0 53.2,294.8 52.5,291.0 49.3,283.2 47.8,277.0 54.0,272.3 55.6,266.0 63.3,261.4 72.7,258.2 75.8,252.0 86.7,248.9 91.4,247.4 92.1,234.9 102.3,235.7 108.5,234.1 122.5,235.7 133.4,240.4 145.8,243.5 155.2,248.9 165.6,249.3 187.4,248.5 196.7,252.4 202.9,251.6 208.4,260.9 211.5,253.2 223.2,245.4 227.8,239.1 241.8,236.0 245.0,225.1 249.6,216.6 259.0,212.7 264.7,216.7 269.3,210.5 281.8,207.4 298.9,209.7 311.4,207.4 325.4,208.1 331.6,215.9 337.8,213.6 340.9,204.2 354.9,198.8 365.8,198.8 378.3,194.9 384.0,195.0 393.3,198.9 402.7,203.6 406.6,206.7 405.0,198.9 401.1,191.1 400.3,174.0 407.4,171.7 418.2,167.8 432.3,165.4 441.6,167.0 449.4,172.5 447.8,180.2 449.4,189.6 455.6,197.4 460.3,200.5 458.7,208.2 457.2,211.4 463.4,217.6 472.7,228.5 475.8,237.8 485.2,243.3 479.0,244.8 469.6,240.9 460.3,234.7 449.4,230.0 438.5,237.8 436.1,240.9 438.5,250.3 443.5,257.0 442.7,262.5 430.3,261.7 422.5,257.8 411.6,260.9 412.4,268.7 405.4,274.9 397.6,278.0 385.1,282.7 375.8,285.8 374.2,293.6 368.0,295.1 361.8,292.0 354.8,294.4 352.5,299.8 349.6,303.9 348.8,307.8 351.1,315.6 357.4,320.2 365.9,324.1 356.6,326.5 345.7,335.4 347.2,330.4 341.0,331.1 340.2,325.7 335.6,322.6 318.7,320.6 304.1,321.6 281.3,318.5 277.2,328.9 268.9,339.2 256.4,341.3 250.2,335.1 237.7,333.0 229.4,339.2 233.6,355.8 221.1,357.9 212.8,353.8 200.4,355.8 190.0,358.9 185.8,361.6 173.4,355.4 164.0,344.5 160.9,338.2 157.8,328.9 153.2,332.0 146.9,339.8 148.5,358.5 136.0,353.8 125.1,347.6 114.2,336.7 106.5,324.2 104.9,314.9 95.6,311.8 89.3,305.6Z" fill="#faf54c" shape-rendering="crispEdges"/><path d="M365.9,324.1 365.1,331.1 363.2,335.0 363.6,350.0 363.0,364.9 354.5,369.6 345.1,364.9 340.5,368.0 332.7,371.1 320.2,377.4 309.3,383.6 303.9,388.2 314.0,389.8 320.2,397.6 321.8,403.8 312.5,405.4 306.2,411.6 309.3,424.0 318.7,433.4 315.6,439.6 303.1,441.2 299.0,442.7 291.2,447.4 283.4,441.2 270.9,434.9 260.0,428.7 255.4,430.3 244.5,439.6 239.8,433.4 227.4,427.2 225.8,420.9 221.1,414.7 214.9,406.9 211.8,400.7 208.7,402.3 200.9,411.6 199.3,422.5 190.0,428.7 171.8,436.0 164.0,431.4 159.4,435.3 142.3,434.5 132.9,428.2 126.7,429.8 129.8,439.1 120.8,441.9 115.6,445.8 109.1,444.5 102.6,440.0 85.8,441.9 76.7,438.0 74.1,430.2 74.1,425.7 85.8,423.1 94.9,422.4 96.1,418.5 92.3,414.0 100.0,412.7 110.4,414.6 119.5,405.6 111.1,395.6 108.0,389.3 99.6,383.4 87.2,377.2 76.3,370.9 74.7,358.5 80.9,346.0 79.4,338.2 68.5,341.4 60.7,334.4 63.8,328.1 62.3,323.5 71.6,316.5 85.6,302.5 89.3,305.6 95.6,311.8 104.9,314.9 106.5,324.2 114.2,336.7 125.1,347.6 136.0,353.8 148.5,358.5 146.9,339.8 153.2,332.0 157.8,328.9 160.9,338.2 164.0,344.5 173.4,355.4 185.8,361.6 190.0,358.9 200.4,355.8 212.8,353.8 221.1,357.9 233.6,355.8 229.4,339.2 237.7,333.0 250.2,335.1 256.4,341.3 268.9,339.2 277.2,328.9 281.3,318.5 304.1,321.6 318.7,320.6 335.6,322.6 340.2,325.7 341.0,331.1 347.2,330.4 345.7,335.4 356.6,326.5Z" fill="#5dd98a" shape-rendering="crispEdges"/><clipPath id="cclip"><path d="M47.8,277.0 54.0,272.3 55.6,266.0 63.3,261.4 72.7,258.2 75.8,252.0 86.7,248.9 91.4,247.4 92.1,234.9 102.3,235.7 108.5,234.1 122.5,235.7 133.4,240.4 145.8,243.5 155.2,248.9 165.6,249.3 187.4,248.5 196.7,252.4 202.9,251.6 208.4,260.9 211.5,253.2 223.2,245.4 227.8,239.1 241.8,236.0 245.0,225.1 249.6,216.6 259.0,212.7 264.7,216.7 269.3,210.5 281.8,207.4 298.9,209.7 311.4,207.4 325.4,208.1 331.6,215.9 337.8,213.6 340.9,204.2 354.9,198.8 365.8,198.8 378.3,194.9 384.0,195.0 393.3,198.9 402.7,203.6 406.6,206.7 405.0,198.9 401.1,191.1 400.3,174.0 407.4,171.7 418.2,167.8 432.3,165.4 441.6,167.0 449.4,172.5 447.8,180.2 449.4,189.6 455.6,197.4 460.3,200.5 458.7,208.2 457.2,211.4 463.4,217.6 472.7,228.5 475.8,237.8 485.2,243.3 479.0,244.8 469.6,240.9 460.3,234.7 449.4,230.0 438.5,237.8 436.1,240.9 438.5,250.3 443.5,257.0 442.7,262.5 430.3,261.7 422.5,257.8 411.6,260.9 412.4,268.7 405.4,274.9 397.6,278.0 385.1,282.7 375.8,285.8 374.2,293.6 368.0,295.1 361.8,292.0 354.8,294.4 352.5,299.8 349.6,303.9 348.8,307.8 351.1,315.6 357.4,320.2 365.9,324.1 365.1,331.1 363.2,335.0 363.6,350.0 363.0,364.9 354.5,369.6 345.1,364.9 340.5,368.0 332.7,371.1 320.2,377.4 309.3,383.6 303.9,388.2 314.0,389.8 320.2,397.6 321.8,403.8 312.5,405.4 306.2,411.6 309.3,424.0 318.7,433.4 315.6,439.6 303.1,441.2 299.0,442.7 291.2,447.4 283.4,441.2 270.9,434.9 260.0,428.7 255.4,430.3 244.5,439.6 239.8,433.4 227.4,427.2 225.8,420.9 221.1,414.7 214.9,406.9 211.8,400.7 208.7,402.3 200.9,411.6 199.3,422.5 190.0,428.7 171.8,436.0 164.0,431.4 159.4,435.3 142.3,434.5 132.9,428.2 126.7,429.8 129.8,439.1 120.8,441.9 115.6,445.8 109.1,444.5 102.6,440.0 85.8,441.9 76.7,438.0 74.1,430.2 74.1,425.7 85.8,423.1 94.9,422.4 96.1,418.5 92.3,414.0 100.0,412.7 110.4,414.6 119.5,405.6 111.1,395.6 108.0,389.3 99.6,383.4 87.2,377.2 76.3,370.9 74.7,358.5 80.9,346.0 79.4,338.2 68.5,341.4 60.7,334.4 63.8,328.1 62.3,323.5 71.6,316.5 85.6,302.5 82.0,300.3 72.7,298.7 64.9,294.0 53.2,294.8 52.5,291.0 49.3,283.2Z"/></clipPath><g clip-path="url(#cclip)" opacity="0.035"><g transform="rotate(-20 250 300)"><rect x="-150" y="0" width="800" height="600" filter="url(#rf2)"/></g></g><path d="M208.4,260.9 215.0,270.0 223.2,279.0 231.5,285.3 250.2,287.4 256.4,293.6 M256.4,293.6 279.2,299.8 289.6,310.2 289.6,316.4 290.0,319.5 M256.4,293.6 231.5,295.7 210.8,297.7 206.6,289.4 190.0,297.7 189.0,299.3 179.6,305.6 173.4,311.8 161.0,314.9 157.8,322.7 157.8,328.9" fill="none" stroke="#e9e23e" stroke-width="2.6"/><path d="M199.3,357.1 203.0,368.0 208.0,380.0 207.0,392.0 211.8,400.7" fill="none" stroke="#52cc80" stroke-width="2.6"/><path d="M4,219 L19.5,221.6 L32.4,226.5 L48.6,224.2 L68,228 L81,229.7 L92.1,234.9" fill="none" stroke="#5f7f9f" stroke-width="1"/><path d="M116,207 L126,202.5 L133,201 M139,216 L147,213 L152,214.5 L165,215.5 M203,214 L219,208.5 M73,180 L80,184.5 M121,221 L122,223" fill="none" stroke="#7d95ad" stroke-width="2.2" stroke-linecap="round"/><path d="M116,207 L126,202.5 L133,201 M139,216 L147,213 L152,214.5 L165,215.5 M203,214 L219,208.5 M73,180 L80,184.5" fill="none" stroke="#dfe6ec" stroke-width="0.8" stroke-linecap="round"/></svg>
<div class="a" style="left:127px;top:274px;width:20px;height:20px;border:1px solid #333"></div>
<svg class="a" style="left:129px;top:276px" width="16" height="16" viewBox="0 0 23 23"><use href="#i-nevihte" fill="#555"/></svg>
<div class="a" style="left:331px;top:238px;width:20px;height:20px;border:1px solid #333"></div>
<svg class="a" style="left:333px;top:240px" width="16" height="16" viewBox="0 0 23 23"><use href="#i-nevihte" fill="#555"/></svg>
<div class="a" style="left:209px;top:314px;width:20px;height:20px;border:1px solid #333"></div>
<svg class="a" style="left:211px;top:316px" width="16" height="16" viewBox="0 0 23 23"><use href="#i-nevihte" fill="#555"/></svg>
<div class="a" style="left:3px;top:161px;width:25px;height:25px;border:1px solid #333;background:rgba(255,255,255,0.5)"></div>
<svg class="a" style="left:5px;top:163px" width="21" height="21" viewBox="0 0 23 23"><use href="#i-nevihte" fill="#3a3a3a"/></svg>
<div class="a" style="left:64.60px;top:170.03px;font-size:12.6px;line-height:12.6px;font-weight:bold;color:#333;letter-spacing:0.9px">13.</div>
<div class="a" style="left:90.30px;top:170.03px;font-size:12.6px;line-height:12.6px;font-weight:bold;color:#333;letter-spacing:0.9px">7.2024</div>
<div class="a" style="left:143.20px;top:170.03px;font-size:12.6px;line-height:12.6px;font-weight:bold;color:#333;letter-spacing:0.9px">00h</div>
<div class="a" style="left:175.90px;top:170.03px;font-size:12.6px;line-height:12.6px;font-weight:bold;color:#333;letter-spacing:0.9px">--</div>
<div class="a" style="left:193.60px;top:170.03px;font-size:12.6px;line-height:12.6px;font-weight:bold;color:#333;letter-spacing:0.9px">14.</div>
<div class="a" style="left:219.00px;top:170.03px;font-size:12.6px;line-height:12.6px;font-weight:bold;color:#333;letter-spacing:0.9px">7.2024</div>
<div class="a" style="left:271.90px;top:170.03px;font-size:12.6px;line-height:12.6px;font-weight:bold;color:#333;letter-spacing:0.9px">00h</div>
<div class="a" style="left:316.70px;top:170.03px;font-size:12.6px;line-height:12.6px;font-weight:bold;color:#333;letter-spacing:0.1px">(CET)</div>
<div class="a" style="left:369.50px;top:412.06px;font-size:9.5px;line-height:9.5px;color:#333;letter-spacing:0.24px">ARSO vreme</div>
<div class="a" style="left:350.70px;top:426.86px;font-size:9.5px;line-height:9.5px;color:#333;letter-spacing:0.5px">12.</div>
<div class="a" style="left:367.80px;top:426.86px;font-size:9.5px;line-height:9.5px;color:#333;letter-spacing:0.5px">7.2024</div>
<div class="a" style="left:407.50px;top:426.86px;font-size:9.5px;line-height:9.5px;color:#333;letter-spacing:0.5px">08:10</div>
<div class="a" style="left:437.40px;top:426.86px;font-size:9.5px;line-height:9.5px;color:#333;letter-spacing:0.5px">CET</div>
<div class="a" style="left:491px;top:161px;width:130px;height:71px;background:#f2f2f2"></div>
<div class="a" style="left:491.00px;top:161.49px;width:130px;text-align:center;font-size:11px;line-height:11px;font-weight:bold;color:#333">00h - 06h</div>
<div class="a" style="left:491px;top:233px;width:130px;height:71px;background:#f2f2f2"></div>
<div class="a" style="left:491.00px;top:233.49px;width:130px;text-align:center;font-size:11px;line-height:11px;font-weight:bold;color:#333">06h - 12h</div>
<div class="a" style="left:491px;top:305px;width:130px;height:71px;background:#f2f2f2"></div>
<div class="a" style="left:491.00px;top:305.49px;width:130px;text-align:center;font-size:11px;line-height:11px;font-weight:bold;color:#333">12h - 18h</div>
<div class="a" style="left:491px;top:377px;width:130px;height:71px;background:#f2f2f2"></div>
<div class="a" style="left:491.00px;top:377.49px;width:130px;text-align:center;font-size:11px;line-height:11px;font-weight:bold;color:#333">18h - 24h</div>
<svg class="a" style="left:0;top:0" width="771" height="720" shape-rendering="crispEdges"><path d="M516.3,196.5 517.5,195.6 517.8,194.3 519.3,193.4 521.2,192.8 521.8,191.6 523.9,190.9 524.9,190.7 525.0,188.2 527.0,188.3 528.2,188.0 531.0,188.3 533.1,189.3 535.6,189.9 537.4,190.9 539.5,191.0 543.7,190.9 545.6,191.6 546.8,191.5 547.9,193.3 548.5,191.8 550.8,190.3 551.7,189.0 554.4,188.4 555.1,186.3 556.0,184.6 557.8,183.8 558.9,184.6 559.8,183.4 562.3,182.8 565.7,183.2 568.1,182.8 570.9,182.9 572.1,184.4 573.3,184.0 573.9,182.1 576.7,181.1 578.8,181.1 581.3,180.3 582.4,180.3 584.2,181.1 586.1,182.0 586.8,182.6 586.5,181.1 585.8,179.6 585.6,176.2 587.0,175.7 589.1,175.0 591.9,174.5 593.7,174.8 595.3,175.9 594.9,177.4 595.3,179.3 596.5,180.8 597.4,181.4 597.1,182.9 596.8,183.6 598.0,184.8 599.8,186.9 600.4,188.8 602.3,189.8 601.1,190.1 599.2,189.4 597.4,188.2 595.3,187.2 593.1,188.8 592.6,189.4 593.1,191.2 594.1,192.5 593.9,193.6 591.5,193.5 590.0,192.7 587.8,193.3 588.0,194.9 586.6,196.1 585.1,196.7 582.6,197.6 580.8,198.2 580.5,199.8 579.3,200.1 578.0,199.4 576.7,199.9 576.2,201.0 575.6,201.8 575.5,202.6 575.9,204.1 577.2,205.0 578.8,205.8 578.7,207.1 578.3,207.9 578.4,210.9 578.3,213.8 576.6,214.7 574.7,213.8 573.8,214.4 572.3,215.0 569.9,216.3 567.7,217.5 566.6,218.4 568.6,218.7 569.9,220.2 570.2,221.5 568.3,221.8 567.1,223.0 567.7,225.4 569.6,227.3 568.9,228.5 566.5,228.8 565.7,229.1 564.2,230.1 562.6,228.8 560.2,227.6 558.0,226.4 557.1,226.7 555.0,228.5 554.0,227.3 551.6,226.1 551.3,224.8 550.4,223.6 549.2,222.1 548.5,220.9 547.9,221.2 546.4,223.0 546.1,225.1 544.3,226.4 540.7,227.8 539.1,226.9 538.2,227.7 534.9,227.5 533.0,226.3 531.8,226.6 532.4,228.4 530.7,229.0 529.6,229.7 528.4,229.5 527.1,228.6 523.8,229.0 522.0,228.2 521.5,226.7 521.5,225.8 523.8,225.3 525.6,225.1 525.8,224.4 525.0,223.5 526.6,223.2 528.6,223.6 530.4,221.8 528.7,219.8 528.1,218.6 526.5,217.4 524.0,216.2 521.9,215.0 521.6,212.5 522.8,210.1 522.5,208.5 520.4,209.2 518.8,207.8 519.4,206.6 519.2,205.6 521.0,204.3 523.7,201.5 523.0,201.1 521.2,200.8 519.7,199.8 517.4,200.0 517.2,199.2 516.6,197.7Z" fill="#2ad566"/><path d="M523.7,201.5 523.0,201.1 521.2,200.8 519.7,199.8 517.4,200.0 517.2,199.2 516.6,197.7 516.3,196.5 517.5,195.6 517.8,194.3 519.3,193.4 521.2,192.8 521.8,191.6 523.9,190.9 524.9,190.7 525.0,188.2 527.0,188.3 528.2,188.0 531.0,188.3 533.1,189.3 535.6,189.9 537.4,190.9 539.5,191.0 543.7,190.9 545.6,191.6 546.8,191.5 547.9,193.3 549.2,195.1 550.8,196.9 552.4,198.1 556.1,198.5 557.3,199.8 552.4,200.2 548.3,200.6 547.5,198.9 544.3,200.6 544.1,200.9 542.2,202.1 541.0,203.3 538.6,204.0 537.9,205.5 537.9,206.7 537.0,207.3 535.8,208.9 536.1,212.5 533.6,211.6 531.5,210.4 529.4,208.2 527.8,205.8 527.5,204.0 525.7,203.3 524.5,202.1Z" fill="#ffff00"/><path d="M532.10,196.51L536.22,196.51M534.16,196.51L534.16,199.28" stroke="#222" stroke-width="0.9" fill="none"/><path d="M516.3,268.5 517.5,267.6 517.8,266.3 519.3,265.4 521.2,264.8 521.8,263.6 523.9,262.9 524.9,262.7 525.0,260.2 527.0,260.3 528.2,260.0 531.0,260.3 533.1,261.3 535.6,261.9 537.4,262.9 539.5,263.0 543.7,262.9 545.6,263.6 546.8,263.5 547.9,265.3 548.5,263.8 550.8,262.3 551.7,261.0 554.4,260.4 555.1,258.3 556.0,256.6 557.8,255.8 558.9,256.6 559.8,255.4 562.3,254.8 565.7,255.2 568.1,254.8 570.9,254.9 572.1,256.4 573.3,256.0 573.9,254.1 576.7,253.1 578.8,253.1 581.3,252.3 582.4,252.3 584.2,253.1 586.1,254.0 586.8,254.6 586.5,253.1 585.8,251.6 585.6,248.2 587.0,247.7 589.1,247.0 591.9,246.5 593.7,246.8 595.3,247.9 594.9,249.4 595.3,251.3 596.5,252.8 597.4,253.4 597.1,254.9 596.8,255.6 598.0,256.8 599.8,258.9 600.4,260.8 602.3,261.8 601.1,262.1 599.2,261.4 597.4,260.2 595.3,259.2 593.1,260.8 592.6,261.4 593.1,263.2 594.1,264.5 593.9,265.6 591.5,265.5 590.0,264.7 587.8,265.3 588.0,266.9 586.6,268.1 585.1,268.7 582.6,269.6 580.8,270.2 580.5,271.8 579.3,272.1 578.0,271.4 576.7,271.9 576.2,273.0 575.6,273.8 575.5,274.6 575.9,276.1 577.2,277.0 578.8,277.8 578.7,279.1 578.3,279.9 578.4,282.9 578.3,285.8 576.6,286.7 574.7,285.8 573.8,286.4 572.3,287.0 569.9,288.3 567.7,289.5 566.6,290.4 568.6,290.7 569.9,292.2 570.2,293.5 568.3,293.8 567.1,295.0 567.7,297.4 569.6,299.3 568.9,300.5 566.5,300.8 565.7,301.1 564.2,302.1 562.6,300.8 560.2,299.6 558.0,298.4 557.1,298.7 555.0,300.5 554.0,299.3 551.6,298.1 551.3,296.8 550.4,295.6 549.2,294.1 548.5,292.9 547.9,293.2 546.4,295.0 546.1,297.1 544.3,298.4 540.7,299.8 539.1,298.9 538.2,299.7 534.9,299.5 533.0,298.3 531.8,298.6 532.4,300.4 530.7,301.0 529.6,301.7 528.4,301.5 527.1,300.6 523.8,301.0 522.0,300.2 521.5,298.7 521.5,297.8 523.8,297.3 525.6,297.1 525.8,296.4 525.0,295.5 526.6,295.2 528.6,295.6 530.4,293.8 528.7,291.8 528.1,290.6 526.5,289.4 524.0,288.2 521.9,287.0 521.6,284.5 522.8,282.1 522.5,280.5 520.4,281.2 518.8,279.8 519.4,278.6 519.2,277.6 521.0,276.3 523.7,273.5 523.0,273.1 521.2,272.8 519.7,271.8 517.4,272.0 517.2,271.2 516.6,269.7Z" fill="#2ad566"/><path d="M516.3,340.5 517.5,339.6 517.8,338.3 519.3,337.4 521.2,336.8 521.8,335.6 523.9,334.9 524.9,334.7 525.0,332.2 527.0,332.3 528.2,332.0 531.0,332.3 533.1,333.3 535.6,333.9 537.4,334.9 539.5,335.0 543.7,334.9 545.6,335.6 546.8,335.5 547.9,337.3 548.5,335.8 550.8,334.3 551.7,333.0 554.4,332.4 555.1,330.3 556.0,328.6 557.8,327.8 558.9,328.6 559.8,327.4 562.3,326.8 565.7,327.2 568.1,326.8 570.9,326.9 572.1,328.4 573.3,328.0 573.9,326.1 576.7,325.1 578.8,325.1 581.3,324.3 582.4,324.3 584.2,325.1 586.1,326.0 586.8,326.6 586.5,325.1 585.8,323.6 585.6,320.2 587.0,319.7 589.1,319.0 591.9,318.5 593.7,318.8 595.3,319.9 594.9,321.4 595.3,323.3 596.5,324.8 597.4,325.4 597.1,326.9 596.8,327.6 598.0,328.8 599.8,330.9 600.4,332.8 602.3,333.8 601.1,334.1 599.2,333.4 597.4,332.2 595.3,331.2 593.1,332.8 592.6,333.4 593.1,335.2 594.1,336.5 593.9,337.6 591.5,337.5 590.0,336.7 587.8,337.3 588.0,338.9 586.6,340.1 585.1,340.7 582.6,341.6 580.8,342.2 580.5,343.8 579.3,344.1 578.0,343.4 576.7,343.9 576.2,345.0 575.6,345.8 575.5,346.6 575.9,348.1 577.2,349.0 578.8,349.8 578.7,351.1 578.3,351.9 578.4,354.9 578.3,357.8 576.6,358.7 574.7,357.8 573.8,358.4 572.3,359.0 569.9,360.3 567.7,361.5 566.6,362.4 568.6,362.7 569.9,364.2 570.2,365.5 568.3,365.8 567.1,367.0 567.7,369.4 569.6,371.3 568.9,372.5 566.5,372.8 565.7,373.1 564.2,374.1 562.6,372.8 560.2,371.6 558.0,370.4 557.1,370.7 555.0,372.5 554.0,371.3 551.6,370.1 551.3,368.8 550.4,367.6 549.2,366.1 548.5,364.9 547.9,365.2 546.4,367.0 546.1,369.1 544.3,370.4 540.7,371.8 539.1,370.9 538.2,371.7 534.9,371.5 533.0,370.3 531.8,370.6 532.4,372.4 530.7,373.0 529.6,373.7 528.4,373.5 527.1,372.6 523.8,373.0 522.0,372.2 521.5,370.7 521.5,369.8 523.8,369.3 525.6,369.1 525.8,368.4 525.0,367.5 526.6,367.2 528.6,367.6 530.4,365.8 528.7,363.8 528.1,362.6 526.5,361.4 524.0,360.2 521.9,359.0 521.6,356.5 522.8,354.1 522.5,352.5 520.4,353.2 518.8,351.8 519.4,350.6 519.2,349.6 521.0,348.3 523.7,345.5 523.0,345.1 521.2,344.8 519.7,343.8 517.4,344.0 517.2,343.2 516.6,341.7Z" fill="#2ad566"/><path d="M523.7,345.5 523.0,345.1 521.2,344.8 519.7,343.8 517.4,344.0 517.2,343.2 516.6,341.7 516.3,340.5 517.5,339.6 517.8,338.3 519.3,337.4 521.2,336.8 521.8,335.6 523.9,334.9 524.9,334.7 525.0,332.2 527.0,332.3 528.2,332.0 531.0,332.3 533.1,333.3 535.6,333.9 537.4,334.9 539.5,335.0 543.7,334.9 545.6,335.6 546.8,335.5 547.9,337.3 548.5,335.8 550.8,334.3 551.7,333.0 554.4,332.4 555.1,330.3 556.0,328.6 557.8,327.8 558.9,328.6 559.8,327.4 562.3,326.8 565.7,327.2 568.1,326.8 570.9,326.9 572.1,328.4 573.3,328.0 573.9,326.1 576.7,325.1 578.8,325.1 581.3,324.3 582.4,324.3 584.2,325.1 586.1,326.0 586.8,326.6 586.5,325.1 585.8,323.6 585.6,320.2 587.0,319.7 589.1,319.0 591.9,318.5 593.7,318.8 595.3,319.9 594.9,321.4 595.3,323.3 596.5,324.8 597.4,325.4 597.1,326.9 596.8,327.6 598.0,328.8 599.8,330.9 600.4,332.8 602.3,333.8 601.1,334.1 599.2,333.4 597.4,332.2 595.3,331.2 593.1,332.8 592.6,333.4 593.1,335.2 594.1,336.5 593.9,337.6 591.5,337.5 590.0,336.7 587.8,337.3 588.0,338.9 586.6,340.1 585.1,340.7 582.6,341.6 580.8,342.2 580.5,343.8 579.3,344.1 578.0,343.4 576.7,343.9 576.2,345.0 575.6,345.8 575.5,346.6 575.9,348.1 577.2,349.0 578.8,349.8 577.0,350.2 574.9,352.0 575.2,351.0 573.9,351.1 573.8,350.1 572.9,349.5 569.6,349.1 566.7,349.3 562.2,348.7 561.4,350.7 559.8,352.7 557.3,353.2 556.1,351.9 553.6,351.5 552.0,352.7 552.8,356.0 550.4,356.4 548.7,355.6 546.3,356.0 544.3,356.6 543.4,357.2 541.0,355.9 539.1,353.8 538.5,352.5 537.9,350.7 537.0,351.3 535.8,352.9 536.1,356.5 533.6,355.6 531.5,354.4 529.4,352.2 527.8,349.8 527.5,348.0 525.7,347.3 524.5,346.1Z" fill="#ffff00"/><path d="M532.10,340.51L536.22,340.51M534.16,340.51L534.16,343.28" stroke="#222" stroke-width="0.9" fill="none"/><path d="M577.43,333.74L577.43,337.12M574.85,334.28L576.83,335.81M548.58,348.51L548.58,352.05L552.36,352.05" stroke="#222" stroke-width="1.1" fill="none"/><path d="M516.3,412.5 517.5,411.6 517.8,410.3 519.3,409.4 521.2,408.8 521.8,407.6 523.9,406.9 524.9,406.7 525.0,404.2 527.0,404.3 528.2,404.0 531.0,404.3 533.1,405.3 535.6,405.9 537.4,406.9 539.5,407.0 543.7,406.9 545.6,407.6 546.8,407.5 547.9,409.3 548.5,407.8 550.8,406.3 551.7,405.0 554.4,404.4 555.1,402.3 556.0,400.6 557.8,399.8 558.9,400.6 559.8,399.4 562.3,398.8 565.7,399.2 568.1,398.8 570.9,398.9 572.1,400.4 573.3,400.0 573.9,398.1 576.7,397.1 578.8,397.1 581.3,396.3 582.4,396.3 584.2,397.1 586.1,398.0 586.8,398.6 586.5,397.1 585.8,395.6 585.6,392.2 587.0,391.7 589.1,391.0 591.9,390.5 593.7,390.8 595.3,391.9 594.9,393.4 595.3,395.3 596.5,396.8 597.4,397.4 597.1,398.9 596.8,399.6 598.0,400.8 599.8,402.9 600.4,404.8 602.3,405.8 601.1,406.1 599.2,405.4 597.4,404.2 595.3,403.2 593.1,404.8 592.6,405.4 593.1,407.2 594.1,408.5 593.9,409.6 591.5,409.5 590.0,408.7 587.8,409.3 588.0,410.9 586.6,412.1 585.1,412.7 582.6,413.6 580.8,414.2 580.5,415.8 579.3,416.1 578.0,415.4 576.7,415.9 576.2,417.0 575.6,417.8 575.5,418.6 575.9,420.1 577.2,421.0 578.8,421.8 578.7,423.1 578.3,423.9 578.4,426.9 578.3,429.8 576.6,430.7 574.7,429.8 573.8,430.4 572.3,431.0 569.9,432.3 567.7,433.5 566.6,434.4 568.6,434.7 569.9,436.2 570.2,437.5 568.3,437.8 567.1,439.0 567.7,441.4 569.6,443.3 568.9,444.5 566.5,444.8 565.7,445.1 564.2,446.1 562.6,444.8 560.2,443.6 558.0,442.4 557.1,442.7 555.0,444.5 554.0,443.3 551.6,442.1 551.3,440.8 550.4,439.6 549.2,438.1 548.5,436.9 547.9,437.2 546.4,439.0 546.1,441.1 544.3,442.4 540.7,443.8 539.1,442.9 538.2,443.7 534.9,443.5 533.0,442.3 531.8,442.6 532.4,444.4 530.7,445.0 529.6,445.7 528.4,445.5 527.1,444.6 523.8,445.0 522.0,444.2 521.5,442.7 521.5,441.8 523.8,441.3 525.6,441.1 525.8,440.4 525.0,439.5 526.6,439.2 528.6,439.6 530.4,437.8 528.7,435.8 528.1,434.6 526.5,433.4 524.0,432.2 521.9,431.0 521.6,428.5 522.8,426.1 522.5,424.5 520.4,425.2 518.8,423.8 519.4,422.6 519.2,421.6 521.0,420.3 523.7,417.5 523.0,417.1 521.2,416.8 519.7,415.8 517.4,416.0 517.2,415.2 516.6,413.7Z" fill="#2ad566"/><path d="M523.7,417.5 523.0,417.1 521.2,416.8 519.7,415.8 517.4,416.0 517.2,415.2 516.6,413.7 516.3,412.5 517.5,411.6 517.8,410.3 519.3,409.4 521.2,408.8 521.8,407.6 523.9,406.9 524.9,406.7 525.0,404.2 527.0,404.3 528.2,404.0 531.0,404.3 533.1,405.3 535.6,405.9 537.4,406.9 539.5,407.0 543.7,406.9 545.6,407.6 546.8,407.5 547.9,409.3 548.5,407.8 550.8,406.3 551.7,405.0 554.4,404.4 555.1,402.3 556.0,400.6 557.8,399.8 558.9,400.6 559.8,399.4 562.3,398.8 565.7,399.2 568.1,398.8 570.9,398.9 572.1,400.4 573.3,400.0 573.9,398.1 576.7,397.1 578.8,397.1 581.3,396.3 582.4,396.3 584.2,397.1 586.1,398.0 586.8,398.6 586.5,397.1 585.8,395.6 585.6,392.2 587.0,391.7 589.1,391.0 591.9,390.5 593.7,390.8 595.3,391.9 594.9,393.4 595.3,395.3 596.5,396.8 597.4,397.4 597.1,398.9 596.8,399.6 598.0,400.8 599.8,402.9 600.4,404.8 602.3,405.8 601.1,406.1 599.2,405.4 597.4,404.2 595.3,403.2 593.1,404.8 592.6,405.4 593.1,407.2 594.1,408.5 593.9,409.6 591.5,409.5 590.0,408.7 587.8,409.3 588.0,410.9 586.6,412.1 585.1,412.7 582.6,413.6 580.8,414.2 580.5,415.8 579.3,416.1 578.0,415.4 576.7,415.9 576.2,417.0 575.6,417.8 575.5,418.6 575.9,420.1 577.2,421.0 578.8,421.8 577.0,422.2 574.9,424.0 575.2,423.0 573.9,423.1 573.8,422.1 572.9,421.5 569.6,421.1 566.7,421.3 562.2,420.7 561.4,422.7 559.8,424.7 557.3,425.2 556.1,423.9 553.6,423.5 552.0,424.7 552.8,428.0 550.4,428.4 548.7,427.6 546.3,428.0 544.3,428.6 543.4,429.2 541.0,427.9 539.1,425.8 538.5,424.5 537.9,422.7 537.0,423.3 535.8,424.9 536.1,428.5 533.6,427.6 531.5,426.4 529.4,424.2 527.8,421.8 527.5,420.0 525.7,419.3 524.5,418.1Z" fill="#ffff00"/><path d="M532.10,412.51L536.22,412.51M534.16,412.51L534.16,415.28" stroke="#222" stroke-width="0.9" fill="none"/><path d="M577.43,405.74L577.43,409.12M574.85,406.28L576.83,407.81M548.58,420.51L548.58,424.05L552.36,424.05" stroke="#222" stroke-width="1.1" fill="none"/></svg>
<div class="a" style="left:627px;top:134px;width:144px;height:26px;background:#4f96b4"></div>
<div class="a" style="left:635.20px;top:141.89px;font-size:11px;line-height:11px;font-weight:bold;color:#fff;-webkit-text-stroke:0.25px #fff">Legenda</div>
<div class="a" style="left:627px;top:161px;width:144px;height:307px;background:#e4eaf2"></div>
<div class="a" style="left:627px;top:468px;width:144px;height:1px;background:#a0a0a0"></div>
<div class="a" style="left:627px;top:469px;width:144px;height:9px;background:#e4eaf2"></div>
<div class="a" style="left:633px;top:165px;width:27px;height:27px;background:#fff;border:2px solid #000"></div>
<svg class="a" style="left:635px;top:167px" width="23" height="23" viewBox="0 0 23 23"><use href="#i-veter" fill="#1a1a1a" /></svg>
<div class="a" style="left:668.00px;top:170.79px;font-size:11px;line-height:11px;color:#222">Veter</div>
<div class="a" style="left:633px;top:195px;width:27px;height:27px;background:#fff;border:2px solid #000"></div>
<svg class="a" style="left:635px;top:197px" width="23" height="23" viewBox="0 0 23 23"><use href="#i-dez" fill="#1a1a1a" /></svg>
<div class="a" style="left:668.00px;top:200.79px;font-size:11px;line-height:11px;color:#222">Dež</div>
<div class="a" style="left:633px;top:225px;width:27px;height:27px;background:#fff;border:2px solid #000"></div>
<svg class="a" style="left:635px;top:227px" width="23" height="23" viewBox="0 0 23 23"><use href="#i-nevihte" fill="#1a1a1a" /></svg>
<div class="a" style="left:668.00px;top:230.79px;font-size:11px;line-height:11px;color:#222">Nevihte</div>
<div class="a" style="left:633px;top:255px;width:27px;height:27px;background:#fff;border:2px solid #000"></div>
<svg class="a" style="left:635px;top:257px" width="23" height="23" viewBox="0 0 23 23"><use href="#i-sneg" fill="#1a1a1a" /></svg>
<div class="a" style="left:668.00px;top:260.79px;font-size:11px;line-height:11px;color:#222">Sneg</div>
<div class="a" style="left:633px;top:285px;width:27px;height:27px;background:#fff;border:2px solid #000"></div>
<svg class="a" style="left:635px;top:287px" width="23" height="23" viewBox="0 0 23 23"><use href="#i-poledica" fill="#1a1a1a" /></svg>
<div class="a" style="left:668.00px;top:290.79px;font-size:11px;line-height:11px;color:#222">Poledica/žled</div>
<div class="a" style="left:633px;top:315px;width:27px;height:27px;background:#fff;border:2px solid #000"></div>
<svg class="a" style="left:635px;top:317px" width="23" height="23" viewBox="0 0 23 23"><use href="#i-nizka" fill="#1a1a1a" /></svg>
<div class="a" style="left:668.00px;top:320.79px;font-size:11px;line-height:11px;color:#222">Nizka temperatura</div>
<div class="a" style="left:633px;top:345px;width:27px;height:27px;background:#fff;border:2px solid #000"></div>
<svg class="a" style="left:635px;top:347px" width="23" height="23" viewBox="0 0 23 23"><use href="#i-visoka" fill="#1a1a1a" /></svg>
<div class="a" style="left:668.00px;top:350.79px;font-size:11px;line-height:11px;color:#222">Visoka temperatura</div>
<div class="a" style="left:633px;top:375px;width:27px;height:27px;background:#fff;border:2px solid #000"></div>
<svg class="a" style="left:635px;top:377px" width="23" height="23" viewBox="0 0 23 23"><use href="#i-pozar" fill="#1a1a1a" /></svg>
<div class="a" style="left:668.00px;top:380.79px;font-size:11px;line-height:11px;color:#222">Požarna ogroženost</div>
<div class="a" style="left:633px;top:405px;width:27px;height:27px;background:#fff;border:2px solid #000"></div>
<svg class="a" style="left:635px;top:407px" width="23" height="23" viewBox="0 0 23 23"><use href="#i-obalni" fill="#1a1a1a" /></svg>
<div class="a" style="left:668.00px;top:410.79px;font-size:11px;line-height:11px;color:#222">Obalni dogodek</div>
<div class="a" style="left:633px;top:435px;width:27px;height:27px;background:#fff;border:2px solid #000"></div>
<svg class="a" style="left:635px;top:437px" width="23" height="23" viewBox="0 0 23 23"><use href="#i-plaz" fill="#1a1a1a" /></svg>
<div class="a" style="left:668.00px;top:440.79px;font-size:11px;line-height:11px;color:#222">Snežni plazovi</div>
<div class="a" style="left:627px;top:478px;width:144px;height:26px;background:#4f96b4"></div>
<div class="a" style="left:635.20px;top:485.89px;font-size:11px;line-height:11px;font-weight:bold;color:#fff;-webkit-text-stroke:0.25px #fff">Legenda</div>
<div class="a" style="left:627px;top:505px;width:144px;height:119px;background:#e4eaf2"></div>
<div class="a" style="left:633px;top:509px;width:27px;height:27px;background:#2ad566;border:1px solid #000"></div>
<div class="a" style="left:668.00px;top:514.79px;font-size:11px;line-height:11px;color:#222">Brez posebnosti</div>
<div class="a" style="left:633px;top:539px;width:27px;height:27px;background:#ffff00;border:1px solid #000"></div>
<div class="a" style="left:668.00px;top:544.79px;font-size:11px;line-height:11px;color:#222">Bodite pozorni</div>
<div class="a" style="left:633px;top:569px;width:27px;height:27px;background:#ffc000;border:1px solid #000"></div>
<div class="a" style="left:668.00px;top:574.79px;font-size:11px;line-height:11px;color:#222">Bodite pripravljeni</div>
<div class="a" style="left:633px;top:599px;width:27px;height:27px;background:#ff0000;border:1px solid #000"></div>
<div class="a" style="left:668.00px;top:604.79px;font-size:11px;line-height:11px;color:#222">Ukrepajte</div>
<div class="a" style="left:1px;top:455px;width:84px;height:37px;background:#f2f2f2"></div>
<div class="a" style="left:1.00px;top:458.14px;width:84px;text-align:center;font-size:12px;line-height:12px;color:#255a86">Vsa</div>
<div class="a" style="left:1.00px;top:469.84px;width:84px;text-align:center;font-size:12px;line-height:12px;color:#255a86">opozorila</div>
<div class="a" style="left:378px;top:455px;width:243px;height:37px;background:#f2f2f2"></div>
<div class="a" style="left:87px;top:455px;width:290px;height:37px;background:#000"></div>
<div class="a" style="left:88px;top:456px;width:24px;height:35px;background:#f2f2f2;border-left:1px solid #fff;border-right:1px solid #fff"></div>
<div class="a" style="left:89px;top:456px;width:22px;height:22px;background:#2ad566;border-right:1px solid #000;border-bottom:1px solid #000"></div>
<svg class="a" style="left:89px;top:456px" width="21" height="21" viewBox="0 0 23 23"><use href="#i-veter" fill="#1a1a1a" filter="url(#halo)"/></svg>
<div class="a" style="left:114px;top:456px;width:24px;height:35px;background:#f2f2f2;border-left:1px solid #fff;border-right:1px solid #fff"></div>
<div class="a" style="left:115px;top:456px;width:22px;height:22px;background:#2ad566;border-right:1px solid #000;border-bottom:1px solid #000"></div>
<svg class="a" style="left:115px;top:456px" width="21" height="21" viewBox="0 0 23 23"><use href="#i-dez" fill="#1a1a1a" filter="url(#halo)"/></svg>
<div class="a" style="left:140px;top:456px;width:54px;height:35px;background:#4f96b4"></div>
<div class="a" style="left:156px;top:456px;width:22px;height:22px;background:#ffff00;border-right:1px solid #000;border-bottom:1px solid #000"></div>
<svg class="a" style="left:156px;top:456px" width="21" height="21" viewBox="0 0 23 23"><use href="#i-nevihte" fill="#1a1a1a" /></svg>
<div class="a" style="left:140.00px;top:478.89px;width:54px;text-align:center;font-size:11px;line-height:11px;font-weight:bold;font-style:italic;color:#fff;-webkit-text-stroke:0.3px #fff">NEVIHTE</div>
<div class="a" style="left:196px;top:456px;width:24px;height:35px;background:#f2f2f2;border-left:1px solid #fff;border-right:1px solid #fff"></div>
<div class="a" style="left:197px;top:456px;width:22px;height:22px;background:#2ad566;border-right:1px solid #000;border-bottom:1px solid #000"></div>
<svg class="a" style="left:197px;top:456px" width="21" height="21" viewBox="0 0 23 23"><use href="#i-sneg" fill="#1a1a1a" filter="url(#halo)"/></svg>
<div class="a" style="left:222px;top:456px;width:24px;height:35px;background:#f2f2f2;border-left:1px solid #fff;border-right:1px solid #fff"></div>
<div class="a" style="left:223px;top:456px;width:22px;height:22px;background:#2ad566;border-right:1px solid #000;border-bottom:1px solid #000"></div>
<svg class="a" style="left:223px;top:456px" width="21" height="21" viewBox="0 0 23 23"><use href="#i-poledica" fill="#1a1a1a" filter="url(#halo)"/></svg>
<div class="a" style="left:248px;top:456px;width:24px;height:35px;background:#f2f2f2;border-left:1px solid #fff;border-right:1px solid #fff"></div>
<div class="a" style="left:249px;top:456px;width:22px;height:22px;background:#2ad566;border-right:1px solid #000;border-bottom:1px solid #000"></div>
<svg class="a" style="left:249px;top:456px" width="21" height="21" viewBox="0 0 23 23"><use href="#i-nizka" fill="#1a1a1a" filter="url(#halo)"/></svg>
<div class="a" style="left:274px;top:456px;width:24px;height:35px;background:#f2f2f2;border-left:1px solid #fff;border-right:1px solid #fff"></div>
<div class="a" style="left:275px;top:456px;width:22px;height:22px;background:#ffc000;border-right:1px solid #000;border-bottom:1px solid #000"></div>
<svg class="a" style="left:275px;top:456px" width="21" height="21" viewBox="0 0 23 23"><use href="#i-visoka" fill="#1a1a1a" filter="url(#halo)"/></svg>
<div class="a" style="left:300px;top:456px;width:24px;height:35px;background:#f2f2f2;border-left:1px solid #fff;border-right:1px solid #fff"></div>
<div class="a" style="left:301px;top:456px;width:22px;height:22px;background:#2ad566;border-right:1px solid #000;border-bottom:1px solid #000"></div>
<svg class="a" style="left:301px;top:456px" width="21" height="21" viewBox="0 0 23 23"><use href="#i-pozar" fill="#1a1a1a" filter="url(#halo)"/></svg>
<div class="a" style="left:326px;top:456px;width:24px;height:35px;background:#f2f2f2;border-left:1px solid #fff;border-right:1px solid #fff"></div>
<div class="a" style="left:327px;top:456px;width:22px;height:22px;background:#2ad566;border-right:1px solid #000;border-bottom:1px solid #000"></div>
<svg class="a" style="left:327px;top:456px" width="21" height="21" viewBox="0 0 23 23"><use href="#i-obalni" fill="#1a1a1a" filter="url(#halo)"/></svg>
<div class="a" style="left:352px;top:456px;width:24px;height:35px;background:#f2f2f2;border-left:1px solid #fff;border-right:1px solid #fff"></div>
<div class="a" style="left:353px;top:456px;width:22px;height:22px;background:#2ad566;border-right:1px solid #000;border-bottom:1px solid #000"></div>
<svg class="a" style="left:353px;top:456px" width="21" height="21" viewBox="0 0 23 23"><use href="#i-plaz" fill="#1a1a1a" filter="url(#halo)"/></svg>
<div class="a" style="left:1px;top:494px;width:84px;height:35px;background:#4f96b4"></div>
<div class="a" style="left:1.00px;top:506.14px;width:84px;text-align:center;font-size:12px;line-height:12px;font-weight:bold;font-style:italic;color:#fff;-webkit-text-stroke:0.25px #fff">Slovenija</div>
<div class="a" style="left:87px;top:494px;width:534px;height:35px;background:#f2f2f2"></div>
<div class="a" style="left:616px;top:512px;width:1px;height:17px;background:#fafafa"></div>
<div class="a" style="left:502px;top:494px;width:22px;height:18px;background:#ffff00"></div>
<div class="a" style="left:501px;top:494px;width:1px;height:35px;background:#fafafa"></div>
<div class="a" style="left:502.00px;top:514.12px;width:22px;text-align:center;font-size:12.5px;line-height:12.5px;color:#1a1a1a">pe</div>
<div class="a" style="left:525px;top:494px;width:22px;height:18px;background:#ffff00"></div>
<div class="a" style="left:524px;top:494px;width:1px;height:35px;background:#fafafa"></div>
<div class="a" style="left:525px;top:512px;width:22px;height:16px;background:#4f96b4"></div>
<div class="a" style="left:525.00px;top:514.12px;width:22px;text-align:center;font-size:12.5px;line-height:12.5px;font-weight:bold;font-style:italic;color:#fff">so</div>
<div class="a" style="left:548px;top:494px;width:22px;height:18px;background:#2ad566"></div>
<div class="a" style="left:547px;top:494px;width:1px;height:35px;background:#fafafa"></div>
<div class="a" style="left:548.00px;top:514.12px;width:22px;text-align:center;font-size:12.5px;line-height:12.5px;color:#1a1a1a">ne</div>
<div class="a" style="left:571px;top:494px;width:22px;height:18px;background:#ffff00"></div>
<div class="a" style="left:570px;top:494px;width:1px;height:35px;background:#fafafa"></div>
<div class="a" style="left:571.00px;top:514.12px;width:22px;text-align:center;font-size:12.5px;line-height:12.5px;color:#1a1a1a">po</div>
<div class="a" style="left:594px;top:494px;width:23px;height:18px;background:#ffff00"></div>
<div class="a" style="left:593px;top:494px;width:1px;height:35px;background:#fafafa"></div>
<div class="a" style="left:594.00px;top:514.12px;width:22px;text-align:center;font-size:12.5px;line-height:12.5px;color:#1a1a1a">to</div>
<div class="a" style="left:1px;top:545px;width:620px;height:175px;background:#f2f2f2;border:1px solid #c8c8c8;border-bottom:none"></div>
<div class="a" style="left:2px;top:547px;width:618px;height:42px;background:#4f96b4;border-top:1px solid #448cac"></div>
<div class="a" style="left:8.00px;top:551.84px;width:300px;text-align:center;font-size:12px;line-height:12px;font-weight:bold;font-style:italic;color:#fff;-webkit-text-stroke:0.2px #fff">NEVIHTE - jutri - SOBOTA</div>
<div class="a" style="left:8.00px;top:571.84px;width:300px;text-align:center;font-size:12px;line-height:12px;font-weight:bold;font-style:italic;color:#fff;-webkit-text-stroke:0.2px #fff">Slovenija</div>
<div class="a" style="left:366.50px;top:561.64px;width:200px;text-align:center;font-size:12px;line-height:12px;font-weight:bold;font-style:italic;color:#fff;-webkit-text-stroke:0.2px #fff">v teku dneva</div>
<div class="a" style="left:63.60px;top:592.19px;width:200px;text-align:center;font-size:11px;line-height:11px;color:#0f4b7e">Opis in nasveti</div>
<div class="a" style="left:310.00px;top:592.87px;width:30px;text-align:center;font-size:11.5px;line-height:11.5px;color:#5a5a5a">00</div>
<div class="a" style="left:324.5px;top:607px;width:1px;height:4px;background:#7a9fbd"></div>
<div class="a" style="left:345.20px;top:592.87px;width:30px;text-align:center;font-size:11.5px;line-height:11.5px;color:#5a5a5a">03</div>
<div class="a" style="left:359.7px;top:607px;width:1px;height:4px;background:#7a9fbd"></div>
<div class="a" style="left:380.40px;top:592.87px;width:30px;text-align:center;font-size:11.5px;line-height:11.5px;color:#5a5a5a">06</div>
<div class="a" style="left:394.9px;top:607px;width:1px;height:4px;background:#7a9fbd"></div>
<div class="a" style="left:415.60px;top:592.87px;width:30px;text-align:center;font-size:11.5px;line-height:11.5px;color:#5a5a5a">09</div>
<div class="a" style="left:430.1px;top:607px;width:1px;height:4px;background:#7a9fbd"></div>
<div class="a" style="left:450.80px;top:592.87px;width:30px;text-align:center;font-size:11.5px;line-height:11.5px;color:#5a5a5a">12</div>
<div class="a" style="left:465.3px;top:607px;width:1px;height:4px;background:#7a9fbd"></div>
<div class="a" style="left:486.00px;top:592.87px;width:30px;text-align:center;font-size:11.5px;line-height:11.5px;color:#5a5a5a">15</div>
<div class="a" style="left:500.5px;top:607px;width:1px;height:4px;background:#7a9fbd"></div>
<div class="a" style="left:521.20px;top:592.87px;width:30px;text-align:center;font-size:11.5px;line-height:11.5px;color:#5a5a5a">18</div>
<div class="a" style="left:535.7px;top:607px;width:1px;height:4px;background:#7a9fbd"></div>
<div class="a" style="left:556.40px;top:592.87px;width:30px;text-align:center;font-size:11.5px;line-height:11.5px;color:#5a5a5a">21</div>
<div class="a" style="left:570.9px;top:607px;width:1px;height:4px;background:#7a9fbd"></div>
<div class="a" style="left:591.60px;top:592.87px;width:30px;text-align:center;font-size:11.5px;line-height:11.5px;color:#5a5a5a">24</div>
<div class="a" style="left:606.1px;top:607px;width:1px;height:4px;background:#7a9fbd"></div>
<div class="a" style="left:2px;top:611px;width:618px;height:1px;background:#8eb0cc"></div>
<div class="a" style="left:14.50px;top:616.44px;font-size:12px;line-height:12px;font-weight:bold;color:#555">Slovenija - severozahod</div>
<div class="a" style="left:295px;top:613px;width:18px;height:18px;background:#ffff00;border:1px solid #000"></div>
<svg class="a" style="left:296px;top:614px" width="16" height="16" viewBox="0 0 23 23"><use href="#i-nevihte" fill="#1a1a1a" /></svg>
<div class="a" style="left:325px;top:613px;width:282px;height:20px;background:#2ad566"></div>
<div class="a" style="left:325.0px;top:613px;width:58.7px;height:20px;background:#ffff00"></div>
<div class="a" style="left:477.5px;top:613px;width:82.1px;height:20px;background:#ffff00"></div>
<div class="a" style="left:359.7px;top:613px;width:1px;height:20px;background:#e8eef4"></div>
<div class="a" style="left:394.9px;top:613px;width:1px;height:20px;background:#e8eef4"></div>
<div class="a" style="left:430.1px;top:613px;width:1px;height:20px;background:#e8eef4"></div>
<div class="a" style="left:465.3px;top:613px;width:1px;height:20px;background:#e8eef4"></div>
<div class="a" style="left:500.5px;top:613px;width:1px;height:20px;background:#e8eef4"></div>
<div class="a" style="left:535.7px;top:613px;width:1px;height:20px;background:#e8eef4"></div>
<div class="a" style="left:570.9px;top:613px;width:1px;height:20px;background:#e8eef4"></div>
<div class="a" style="left:2px;top:633px;width:618px;height:1px;background:#8eb0cc"></div>
<div class="a" style="left:14.50px;top:638.44px;font-size:12px;line-height:12px;font-weight:bold;color:#555">Slovenija - jugozahod</div>
<div class="a" style="left:325px;top:635px;width:282px;height:20px;background:#2ad566"></div>
<div class="a" style="left:359.7px;top:635px;width:1px;height:20px;background:#e8eef4"></div>
<div class="a" style="left:394.9px;top:635px;width:1px;height:20px;background:#e8eef4"></div>
<div class="a" style="left:430.1px;top:635px;width:1px;height:20px;background:#e8eef4"></div>
<div class="a" style="left:465.3px;top:635px;width:1px;height:20px;background:#e8eef4"></div>
<div class="a" style="left:500.5px;top:635px;width:1px;height:20px;background:#e8eef4"></div>
<div class="a" style="left:535.7px;top:635px;width:1px;height:20px;background:#e8eef4"></div>
<div class="a" style="left:570.9px;top:635px;width:1px;height:20px;background:#e8eef4"></div>
<div class="a" style="left:2px;top:655px;width:618px;height:1px;background:#8eb0cc"></div>
<div class="a" style="left:14.50px;top:660.44px;font-size:12px;line-height:12px;font-weight:bold;color:#555">Slovenija - osrednja</div>
<div class="a" style="left:295px;top:657px;width:18px;height:18px;background:#ffff00;border:1px solid #000"></div>
<svg class="a" style="left:296px;top:658px" width="16" height="16" viewBox="0 0 23 23"><use href="#i-nevihte" fill="#1a1a1a" /></svg>
<div class="a" style="left:325px;top:657px;width:282px;height:20px;background:#2ad566"></div>
<div class="a" style="left:477.5px;top:657px;width:82.1px;height:20px;background:#ffff00"></div>
<div class="a" style="left:359.7px;top:657px;width:1px;height:20px;background:#e8eef4"></div>
<div class="a" style="left:394.9px;top:657px;width:1px;height:20px;background:#e8eef4"></div>
<div class="a" style="left:430.1px;top:657px;width:1px;height:20px;background:#e8eef4"></div>
<div class="a" style="left:465.3px;top:657px;width:1px;height:20px;background:#e8eef4"></div>
<div class="a" style="left:500.5px;top:657px;width:1px;height:20px;background:#e8eef4"></div>
<div class="a" style="left:535.7px;top:657px;width:1px;height:20px;background:#e8eef4"></div>
<div class="a" style="left:570.9px;top:657px;width:1px;height:20px;background:#e8eef4"></div>
<div class="a" style="left:2px;top:677px;width:618px;height:1px;background:#8eb0cc"></div>
<div class="a" style="left:14.50px;top:682.44px;font-size:12px;line-height:12px;font-weight:bold;color:#555">Slovenija - jugovzhod</div>
<div class="a" style="left:325px;top:679px;width:282px;height:20px;background:#2ad566"></div>
<div class="a" style="left:359.7px;top:679px;width:1px;height:20px;background:#e8eef4"></div>
<div class="a" style="left:394.9px;top:679px;width:1px;height:20px;background:#e8eef4"></div>
<div class="a" style="left:430.1px;top:679px;width:1px;height:20px;background:#e8eef4"></div>
<div class="a" style="left:465.3px;top:679px;width:1px;height:20px;background:#e8eef4"></div>
<div class="a" style="left:500.5px;top:679px;width:1px;height:20px;background:#e8eef4"></div>
<div class="a" style="left:535.7px;top:679px;width:1px;height:20px;background:#e8eef4"></div>
<div class="a" style="left:570.9px;top:679px;width:1px;height:20px;background:#e8eef4"></div>
<div class="a" style="left:2px;top:699px;width:618px;height:1px;background:#8eb0cc"></div>
<div class="a" style="left:14.50px;top:704.44px;font-size:12px;line-height:12px;font-weight:bold;color:#555">Slovenija - severovzhod</div>
<div class="a" style="left:295px;top:701px;width:18px;height:18px;background:#ffff00;border:1px solid #000"></div>
<svg class="a" style="left:296px;top:702px" width="16" height="16" viewBox="0 0 23 23"><use href="#i-nevihte" fill="#1a1a1a" /></svg>
<div class="a" style="left:325px;top:701px;width:282px;height:20px;background:#2ad566"></div>
<div class="a" style="left:465.8px;top:701px;width:82.7px;height:20px;background:#ffff00"></div>
<div class="a" style="left:359.7px;top:701px;width:1px;height:20px;background:#e8eef4"></div>
<div class="a" style="left:394.9px;top:701px;width:1px;height:20px;background:#e8eef4"></div>
<div class="a" style="left:430.1px;top:701px;width:1px;height:20px;background:#e8eef4"></div>
<div class="a" style="left:465.3px;top:701px;width:1px;height:20px;background:#e8eef4"></div>
<div class="a" style="left:500.5px;top:701px;width:1px;height:20px;background:#e8eef4"></div>
<div class="a" style="left:535.7px;top:701px;width:1px;height:20px;background:#e8eef4"></div>
<div class="a" style="left:570.9px;top:701px;width:1px;height:20px;background:#e8eef4"></div></body></html>
